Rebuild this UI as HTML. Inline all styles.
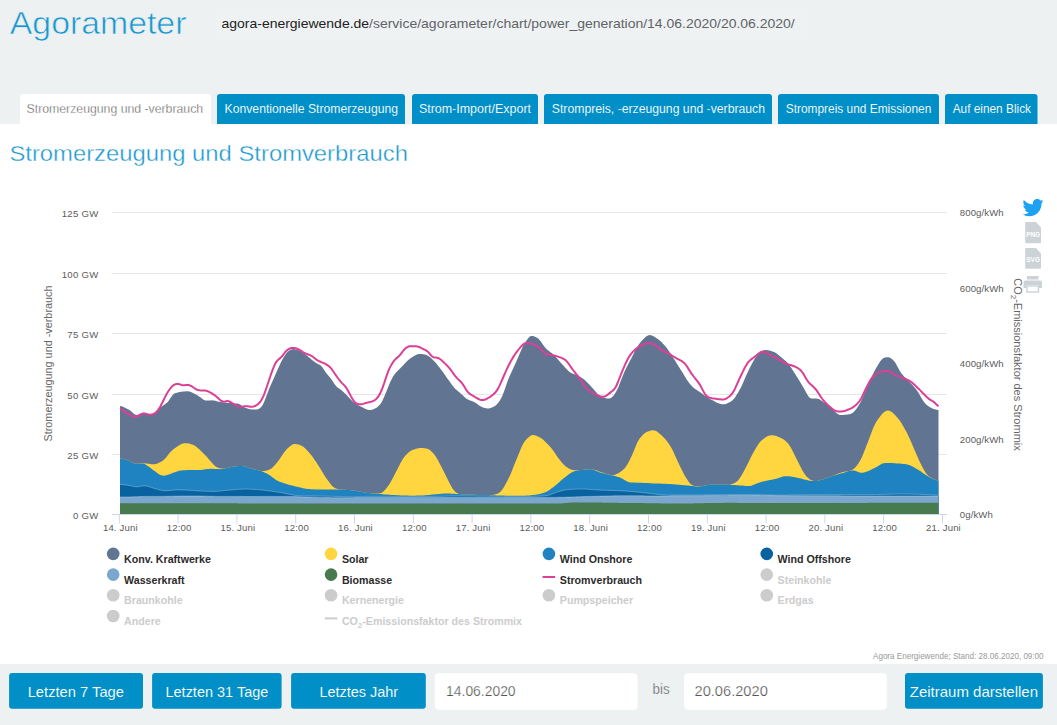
<!DOCTYPE html>
<html><head><meta charset="utf-8"><title>Agorameter</title>
<style>
html,body{margin:0;padding:0;background:#fff;}
body{width:1057px;height:725px;overflow:hidden;position:relative;font-family:"Liberation Sans",sans-serif;}
svg{position:absolute;left:0;top:0;display:block;}
svg text{font-family:"Liberation Sans",sans-serif;}
</style></head><body>
<svg width="1057" height="725" viewBox="0 0 1057 725">
<rect x="0" y="0" width="1057" height="124" fill="#edf1f2"/>
<rect x="216" y="8" width="593" height="31" fill="#eff2f3"/>
<text x="9.8" y="34" textLength="176.6" lengthAdjust="spacingAndGlyphs" font-size="31" fill="#1b97cf" stroke="#edf1f2" stroke-width="0.6">Agorameter</text>
<text x="221.5" y="27.8" textLength="573.2" lengthAdjust="spacingAndGlyphs" font-size="13.2" fill="#606368"><tspan fill="#222222">agora-energiewende.de</tspan>/service/agorameter/chart/power_generation/14.06.2020/20.06.2020/</text>
<path d="M20,124 V97 Q20,94 23,94 H208 Q211,94 211,97 V124 Z" fill="#ffffff"/><text x="26.6" y="112.9" textLength="176.5" lengthAdjust="spacingAndGlyphs" fill="#5a5a5a" stroke="#ffffff" stroke-width="0.3" font-size="12">Stromerzeugung und -verbrauch</text><path d="M217,124 V97 Q217,94 220,94 H402 Q405,94 405,97 V124 Z" fill="#008fc6"/><text x="224.6" y="112.9" textLength="173.4" lengthAdjust="spacingAndGlyphs" fill="#ffffff" stroke="#008fc6" stroke-width="0.1" font-size="12">Konventionelle Stromerzeugung</text><path d="M412,124 V97 Q412,94 415,94 H535 Q538,94 538,97 V124 Z" fill="#008fc6"/><text x="418.9" y="112.9" textLength="112.1" lengthAdjust="spacingAndGlyphs" fill="#ffffff" stroke="#008fc6" stroke-width="0.1" font-size="12">Strom-Import/Export</text><path d="M544,124 V97 Q544,94 547,94 H769 Q772,94 772,97 V124 Z" fill="#008fc6"/><text x="551.8" y="112.9" textLength="213.2" lengthAdjust="spacingAndGlyphs" fill="#ffffff" stroke="#008fc6" stroke-width="0.1" font-size="12">Strompreis, -erzeugung und -verbrauch</text><path d="M778,124 V97 Q778,94 781,94 H936 Q939,94 939,97 V124 Z" fill="#008fc6"/><text x="785.7" y="112.9" textLength="145.6" lengthAdjust="spacingAndGlyphs" fill="#ffffff" stroke="#008fc6" stroke-width="0.1" font-size="12">Strompreis und Emissionen</text><path d="M945,124 V97 Q945,94 948,94 H1034.5 Q1037.5,94 1037.5,97 V124 Z" fill="#008fc6"/><text x="952.7" y="112.9" textLength="78.3" lengthAdjust="spacingAndGlyphs" fill="#ffffff" stroke="#008fc6" stroke-width="0.1" font-size="12">Auf einen Blick</text>
<text x="9.4" y="160.5" textLength="398.5" lengthAdjust="spacingAndGlyphs" font-size="22" fill="#1b97cf" stroke="#ffffff" stroke-width="0.35">Stromerzeugung und Stromverbrauch</text>
<g stroke="#e6e6e6" stroke-width="1"><line x1="112" y1="454.5" x2="947" y2="454.5"/><line x1="112" y1="394.5" x2="947" y2="394.5"/><line x1="112" y1="333.5" x2="947" y2="333.5"/><line x1="112" y1="273.5" x2="947" y2="273.5"/><line x1="112" y1="212.5" x2="947" y2="212.5"/></g>
<path d="M120.0,514.5L120.0,405.9L121.5,406.3L123.0,406.8L124.5,407.4L126.0,408.2L127.5,408.9L129.0,409.8L130.5,410.8L132.0,412.0L133.5,413.4L135.0,414.5L136.5,415.0L138.0,414.9L139.5,414.6L141.0,414.2L142.5,413.8L144.0,413.6L145.5,413.6L147.0,413.7L148.5,413.8L150.0,413.9L151.5,414.0L153.0,413.8L154.5,413.2L156.0,411.9L157.5,410.2L159.0,408.6L160.5,407.2L162.0,406.2L163.5,405.2L165.0,404.2L166.5,403.1L168.0,401.7L169.5,399.6L171.0,397.3L172.5,395.2L174.0,393.8L175.5,393.1L177.0,392.7L178.5,392.3L180.0,392.0L181.5,391.7L183.0,391.5L184.5,391.4L186.0,391.3L187.5,391.2L189.0,391.4L190.5,391.8L192.0,392.5L193.5,393.2L195.0,394.0L196.5,394.8L198.0,395.8L199.5,396.7L201.0,397.8L202.5,399.0L204.0,399.9L205.5,400.5L207.0,400.6L208.5,400.5L210.0,400.4L211.5,400.3L213.0,400.4L214.5,400.6L216.0,401.0L217.5,401.5L219.0,401.8L220.5,402.1L222.0,402.3L223.5,402.5L225.0,402.6L226.5,402.8L228.0,402.9L229.5,403.0L231.0,403.1L232.5,403.2L234.0,403.3L235.5,403.4L237.0,403.5L238.5,403.8L240.0,404.4L241.5,405.4L243.0,406.5L244.5,407.4L246.0,408.1L247.5,408.6L249.0,409.0L250.5,409.3L252.0,409.4L253.5,409.4L255.0,409.4L256.5,409.4L258.0,409.2L259.5,408.6L261.0,407.2L262.5,405.2L264.0,402.3L265.5,398.6L267.0,394.4L268.5,390.4L270.0,386.8L271.5,383.4L273.0,380.1L274.5,376.8L276.0,373.3L277.5,369.8L279.0,366.4L280.5,363.2L282.0,360.3L283.5,357.6L285.0,355.2L286.5,353.1L288.0,351.6L289.5,350.4L291.0,349.6L292.5,349.2L294.0,349.1L295.5,349.4L297.0,349.8L298.5,350.3L300.0,350.9L301.5,351.7L303.0,352.6L304.5,353.7L306.0,354.9L307.5,356.1L309.0,357.4L310.5,358.6L312.0,359.9L313.5,361.1L315.0,362.2L316.5,363.2L318.0,363.9L319.5,364.7L321.0,365.7L322.5,367.4L324.0,369.7L325.5,372.0L327.0,374.1L328.5,375.8L330.0,377.6L331.5,379.6L333.0,381.8L334.5,384.1L336.0,386.0L337.5,387.5L339.0,388.6L340.5,389.6L342.0,390.8L343.5,392.1L345.0,393.5L346.5,395.0L348.0,396.6L349.5,398.2L351.0,399.8L352.5,401.3L354.0,402.5L355.5,403.6L357.0,404.5L358.5,405.4L360.0,406.1L361.5,406.9L363.0,407.6L364.5,408.4L366.0,409.1L367.5,409.7L369.0,410.1L370.5,410.1L372.0,409.8L373.5,409.3L375.0,408.6L376.5,407.7L378.0,406.6L379.5,405.1L381.0,403.2L382.5,400.6L384.0,397.3L385.5,393.6L387.0,389.9L388.5,386.2L390.0,382.6L391.5,379.4L393.0,376.6L394.5,374.4L396.0,372.6L397.5,371.0L399.0,369.5L400.5,368.0L402.0,366.5L403.5,364.9L405.0,363.2L406.5,361.7L408.0,360.3L409.5,359.1L411.0,358.0L412.5,356.9L414.0,356.0L415.5,355.2L417.0,354.5L418.5,354.1L420.0,354.0L421.5,354.1L423.0,354.2L424.5,354.5L426.0,354.8L427.5,355.4L429.0,356.4L430.5,357.6L432.0,359.0L433.5,360.4L435.0,362.0L436.5,363.8L438.0,365.7L439.5,367.6L441.0,369.6L442.5,371.6L444.0,373.6L445.5,375.8L447.0,377.9L448.5,380.0L450.0,382.1L451.5,384.2L453.0,386.2L454.5,388.0L456.0,389.5L457.5,390.8L459.0,392.0L460.5,393.3L462.0,394.7L463.5,396.1L465.0,397.5L466.5,398.7L468.0,399.6L469.5,400.3L471.0,400.8L472.5,401.3L474.0,401.9L475.5,402.8L477.0,403.8L478.5,405.0L480.0,406.0L481.5,406.8L483.0,407.4L484.5,407.9L486.0,408.3L487.5,408.5L489.0,408.4L490.5,408.1L492.0,407.6L493.5,406.8L495.0,405.9L496.5,404.7L498.0,403.0L499.5,400.9L501.0,398.5L502.5,395.4L504.0,391.5L505.5,387.2L507.0,382.8L508.5,378.8L510.0,375.2L511.5,371.9L513.0,368.7L514.5,365.5L516.0,362.2L517.5,358.8L519.0,355.2L520.5,351.7L522.0,348.3L523.5,345.3L525.0,342.7L526.5,340.4L528.0,338.4L529.5,336.8L531.0,336.0L532.5,336.0L534.0,336.3L535.5,337.0L537.0,337.7L538.5,338.8L540.0,340.4L541.5,342.4L543.0,344.7L544.5,346.8L546.0,348.6L547.5,350.0L549.0,351.1L550.5,352.2L552.0,353.3L553.5,354.6L555.0,356.2L556.5,357.8L558.0,359.5L559.5,361.3L561.0,362.9L562.5,364.6L564.0,366.3L565.5,368.0L567.0,369.6L568.5,371.1L570.0,372.2L571.5,373.1L573.0,373.8L574.5,374.3L576.0,374.8L577.5,375.4L579.0,376.2L580.5,377.0L582.0,378.0L583.5,379.1L585.0,380.3L586.5,381.7L588.0,383.2L589.5,384.8L591.0,386.4L592.5,388.0L594.0,389.8L595.5,391.6L597.0,393.3L598.5,394.8L600.0,396.0L601.5,396.8L603.0,397.4L604.5,397.8L606.0,398.2L607.5,398.4L609.0,398.5L610.5,398.2L612.0,397.3L613.5,395.7L615.0,393.5L616.5,391.0L618.0,388.0L619.5,384.3L621.0,380.3L622.5,376.4L624.0,372.8L625.5,369.6L627.0,366.6L628.5,363.7L630.0,360.8L631.5,357.9L633.0,355.0L634.5,352.0L636.0,349.1L637.5,346.5L639.0,344.2L640.5,342.3L642.0,340.5L643.5,338.9L645.0,337.4L646.5,336.2L648.0,335.4L649.5,335.1L651.0,335.2L652.5,335.7L654.0,336.5L655.5,337.4L657.0,338.4L658.5,339.5L660.0,340.7L661.5,342.1L663.0,343.7L664.5,345.3L666.0,347.1L667.5,349.1L669.0,351.2L670.5,353.5L672.0,355.8L673.5,358.2L675.0,360.6L676.5,363.0L678.0,365.4L679.5,367.8L681.0,370.2L682.5,372.6L684.0,375.0L685.5,377.5L687.0,379.9L688.5,382.1L690.0,384.1L691.5,385.8L693.0,387.2L694.5,388.4L696.0,389.5L697.5,390.5L699.0,391.5L700.5,392.5L702.0,393.6L703.5,394.7L705.0,395.7L706.5,396.8L708.0,397.8L709.5,398.7L711.0,399.5L712.5,400.3L714.0,401.1L715.5,401.9L717.0,402.7L718.5,403.3L720.0,403.8L721.5,404.2L723.0,404.3L724.5,404.2L726.0,403.9L727.5,403.3L729.0,402.6L730.5,401.7L732.0,400.7L733.5,399.2L735.0,397.4L736.5,395.1L738.0,392.7L739.5,390.1L741.0,387.2L742.5,384.1L744.0,380.6L745.5,377.1L747.0,373.8L748.5,370.6L750.0,367.5L751.5,364.5L753.0,361.7L754.5,359.1L756.0,357.0L757.5,355.2L759.0,353.6L760.5,352.1L762.0,350.9L763.5,350.2L765.0,349.9L766.5,350.0L768.0,350.2L769.5,350.5L771.0,350.9L772.5,351.4L774.0,352.0L775.5,352.8L777.0,353.8L778.5,355.0L780.0,356.2L781.5,357.5L783.0,358.7L784.5,359.9L786.0,361.2L787.5,362.8L789.0,364.6L790.5,366.7L792.0,369.0L793.5,371.4L795.0,373.8L796.5,376.2L798.0,378.6L799.5,381.0L801.0,383.5L802.5,385.9L804.0,388.5L805.5,391.3L807.0,394.1L808.5,396.4L810.0,397.9L811.5,398.5L813.0,398.6L814.5,398.6L816.0,398.6L817.5,398.7L819.0,399.1L820.5,399.9L822.0,401.0L823.5,402.2L825.0,403.3L826.5,404.4L828.0,405.5L829.5,406.7L831.0,407.9L832.5,409.3L834.0,410.7L835.5,412.2L837.0,413.5L838.5,414.4L840.0,414.9L841.5,415.0L843.0,414.9L844.5,414.8L846.0,414.7L847.5,414.5L849.0,414.2L850.5,413.9L852.0,413.3L853.5,412.2L855.0,410.6L856.5,408.7L858.0,406.6L859.5,404.1L861.0,401.2L862.5,398.0L864.0,394.6L865.5,391.1L867.0,387.5L868.5,383.9L870.0,380.4L871.5,377.1L873.0,374.0L874.5,371.0L876.0,368.3L877.5,365.8L879.0,363.3L880.5,361.0L882.0,359.2L883.5,358.1L885.0,357.5L886.5,357.3L888.0,357.2L889.5,357.5L891.0,358.2L892.5,359.4L894.0,360.9L895.5,363.0L897.0,365.7L898.5,368.6L900.0,371.3L901.5,373.4L903.0,375.2L904.5,376.9L906.0,378.5L907.5,379.9L909.0,381.4L910.5,382.9L912.0,384.5L913.5,386.2L915.0,387.9L916.5,389.8L918.0,392.1L919.5,394.6L921.0,397.2L922.5,399.8L924.0,401.9L925.5,403.7L927.0,405.2L928.5,406.3L930.0,407.2L931.5,408.0L933.0,408.7L934.5,409.2L936.0,409.6L937.5,409.9L938.5,410.0L938.5,514.5Z" fill="#617593"/>
<path d="M120.0,514.5L120.0,458.4L121.5,458.5L123.0,458.9L124.5,459.3L126.0,459.7L127.5,460.2L129.0,460.9L130.5,461.7L132.0,462.6L133.5,463.3L135.0,463.6L136.5,463.7L138.0,463.5L139.5,463.4L141.0,463.3L142.5,463.2L144.0,463.3L145.5,463.4L147.0,463.6L148.5,463.8L150.0,464.0L151.5,464.2L153.0,464.2L154.5,464.2L156.0,463.9L157.5,463.4L159.0,462.8L160.5,462.1L162.0,461.2L163.5,460.1L165.0,458.7L166.5,456.9L168.0,455.0L169.5,453.1L171.0,451.4L172.5,450.0L174.0,448.8L175.5,447.7L177.0,446.7L178.5,445.7L180.0,444.8L181.5,444.1L183.0,443.6L184.5,443.3L186.0,443.2L187.5,443.3L189.0,443.5L190.5,443.9L192.0,444.4L193.5,445.0L195.0,445.8L196.5,446.9L198.0,448.2L199.5,449.6L201.0,451.0L202.5,452.4L204.0,453.9L205.5,455.5L207.0,457.1L208.5,458.9L210.0,460.6L211.5,462.3L213.0,463.9L214.5,465.4L216.0,466.7L217.5,467.6L219.0,468.1L220.5,468.4L222.0,468.6L223.5,468.7L225.0,468.5L226.5,468.1L228.0,467.7L229.5,467.4L231.0,467.1L232.5,466.8L234.0,466.6L235.5,466.4L237.0,466.2L238.5,466.0L240.0,466.0L241.5,465.9L243.0,466.1L244.5,466.4L246.0,466.8L247.5,467.3L249.0,467.9L250.5,468.4L252.0,468.8L253.5,469.2L255.0,469.5L256.5,469.9L258.0,470.2L259.5,470.6L261.0,471.1L262.5,471.1L264.0,471.0L265.5,470.7L267.0,470.4L268.5,469.9L270.0,469.3L271.5,468.4L273.0,467.1L274.5,465.5L276.0,463.7L277.5,461.9L279.0,459.9L280.5,457.8L282.0,455.5L283.5,453.3L285.0,451.3L286.5,449.6L288.0,448.1L289.5,446.7L291.0,445.5L292.5,444.6L294.0,444.1L295.5,444.0L297.0,444.2L298.5,444.6L300.0,445.1L301.5,445.7L303.0,446.6L304.5,447.8L306.0,449.2L307.5,450.8L309.0,452.4L310.5,454.2L312.0,456.1L313.5,458.2L315.0,460.4L316.5,462.6L318.0,464.9L319.5,467.3L321.0,469.8L322.5,472.3L324.0,474.7L325.5,477.0L327.0,479.2L328.5,481.3L330.0,483.3L331.5,485.2L333.0,486.7L334.5,487.7L336.0,488.4L337.5,489.0L339.0,489.3L340.5,489.5L342.0,489.6L343.5,489.7L345.0,489.8L346.5,489.9L348.0,490.0L349.5,490.1L351.0,490.3L352.5,490.4L354.0,490.6L355.5,490.8L357.0,491.1L358.5,491.4L360.0,491.7L361.5,491.9L363.0,492.2L364.5,492.5L366.0,492.7L367.5,492.9L369.0,493.1L370.5,493.2L372.0,493.3L373.5,493.4L375.0,493.4L376.5,493.5L378.0,493.5L379.5,493.5L381.0,493.1L382.5,492.3L384.0,490.9L385.5,489.3L387.0,487.5L388.5,485.5L390.0,483.2L391.5,480.6L393.0,477.8L394.5,474.8L396.0,471.9L397.5,469.0L399.0,466.1L400.5,463.1L402.0,460.4L403.5,458.0L405.0,456.0L406.5,454.4L408.0,452.9L409.5,451.7L411.0,450.7L412.5,449.9L414.0,449.4L415.5,448.9L417.0,448.6L418.5,448.3L420.0,448.1L421.5,448.1L423.0,448.1L424.5,448.3L426.0,448.5L427.5,448.8L429.0,449.5L430.5,450.5L432.0,451.9L433.5,453.5L435.0,455.5L436.5,457.7L438.0,460.3L439.5,463.2L441.0,466.1L442.5,469.0L444.0,472.0L445.5,475.1L447.0,478.1L448.5,481.0L450.0,484.0L451.5,486.8L453.0,489.2L454.5,491.0L456.0,492.4L457.5,493.3L459.0,493.9L460.5,494.2L462.0,494.3L463.5,494.4L465.0,494.4L466.5,494.5L468.0,494.6L469.5,494.6L471.0,494.7L472.5,494.8L474.0,494.8L475.5,494.8L477.0,494.9L478.5,494.9L480.0,494.9L481.5,495.0L483.0,495.0L484.5,495.0L486.0,495.1L487.5,495.1L489.0,495.1L490.5,495.1L492.0,494.9L493.5,494.7L495.0,494.4L496.5,494.0L498.0,493.5L499.5,492.6L501.0,491.2L502.5,489.2L504.0,486.9L505.5,484.2L507.0,481.5L508.5,478.6L510.0,475.4L511.5,471.9L513.0,468.1L514.5,464.3L516.0,460.6L517.5,456.9L519.0,453.2L520.5,449.5L522.0,446.1L523.5,443.3L525.0,441.1L526.5,439.3L528.0,437.7L529.5,436.4L531.0,435.5L532.5,435.0L534.0,435.0L535.5,435.4L537.0,436.0L538.5,436.7L540.0,437.5L541.5,438.5L543.0,439.6L544.5,441.0L546.0,442.4L547.5,444.0L549.0,445.6L550.5,447.3L552.0,449.1L553.5,451.1L555.0,453.3L556.5,455.6L558.0,457.7L559.5,459.6L561.0,461.4L562.5,463.2L564.0,464.8L565.5,466.2L567.0,467.3L568.5,468.3L570.0,469.1L571.5,469.7L573.0,470.1L574.5,470.3L576.0,470.3L577.5,470.2L579.0,470.1L580.5,470.0L582.0,469.9L583.5,469.8L585.0,469.6L586.5,469.5L588.0,469.3L589.5,469.3L591.0,469.3L592.5,469.4L594.0,469.7L595.5,470.1L597.0,470.6L598.5,471.2L600.0,471.7L601.5,472.3L603.0,472.8L604.5,473.2L606.0,473.7L607.5,474.2L609.0,474.6L610.5,475.0L612.0,475.2L613.5,475.2L615.0,474.8L616.5,474.1L618.0,473.4L619.5,472.5L621.0,471.4L622.5,470.2L624.0,468.9L625.5,467.2L627.0,465.1L628.5,462.5L630.0,459.5L631.5,456.3L633.0,452.9L634.5,449.2L636.0,445.4L637.5,442.1L639.0,439.5L640.5,437.4L642.0,435.7L643.5,434.2L645.0,433.0L646.5,432.1L648.0,431.5L649.5,431.0L651.0,430.6L652.5,430.3L654.0,430.4L655.5,430.8L657.0,431.6L658.5,432.7L660.0,433.9L661.5,435.3L663.0,436.7L664.5,438.2L666.0,440.0L667.5,442.0L669.0,444.1L670.5,446.4L672.0,449.1L673.5,452.1L675.0,455.4L676.5,458.8L678.0,462.1L679.5,465.3L681.0,468.3L682.5,471.3L684.0,474.2L685.5,476.9L687.0,479.3L688.5,481.4L690.0,483.4L691.5,484.8L693.0,485.6L694.5,486.0L696.0,486.1L697.5,486.3L699.0,486.4L700.5,486.4L702.0,486.2L703.5,485.8L705.0,485.5L706.5,485.2L708.0,485.0L709.5,484.8L711.0,484.8L712.5,484.8L714.0,484.8L715.5,484.8L717.0,484.8L718.5,484.8L720.0,484.8L721.5,484.8L723.0,484.8L724.5,484.8L726.0,484.8L727.5,484.8L729.0,484.7L730.5,484.4L732.0,484.0L733.5,483.4L735.0,482.7L736.5,481.8L738.0,480.5L739.5,478.6L741.0,476.3L742.5,473.7L744.0,471.0L745.5,468.2L747.0,465.3L748.5,462.2L750.0,459.0L751.5,456.0L753.0,453.2L754.5,450.5L756.0,447.9L757.5,445.5L759.0,443.3L760.5,441.5L762.0,440.1L763.5,438.9L765.0,437.7L766.5,436.8L768.0,436.0L769.5,435.5L771.0,435.2L772.5,435.2L774.0,435.5L775.5,435.8L777.0,436.3L778.5,436.9L780.0,437.5L781.5,438.2L783.0,439.1L784.5,440.1L786.0,441.4L787.5,442.8L789.0,444.7L790.5,447.1L792.0,449.8L793.5,452.7L795.0,455.7L796.5,458.7L798.0,461.8L799.5,464.8L801.0,467.7L802.5,470.4L804.0,472.9L805.5,475.2L807.0,477.0L808.5,478.3L810.0,479.4L811.5,480.2L813.0,480.8L814.5,481.0L816.0,481.0L817.5,480.7L819.0,480.4L820.5,480.0L822.0,479.6L823.5,479.2L825.0,478.7L826.5,478.1L828.0,477.6L829.5,477.0L831.0,476.5L832.5,475.9L834.0,475.3L835.5,474.7L837.0,474.1L838.5,473.6L840.0,473.0L841.5,472.5L843.0,472.1L844.5,471.8L846.0,471.5L847.5,471.3L849.0,471.0L850.5,470.6L852.0,470.0L853.5,469.1L855.0,467.7L856.5,465.9L858.0,463.9L859.5,461.7L861.0,459.0L862.5,455.8L864.0,452.1L865.5,448.2L867.0,444.3L868.5,440.4L870.0,436.5L871.5,432.5L873.0,428.6L874.5,425.2L876.0,422.3L877.5,420.0L879.0,417.9L880.5,415.9L882.0,414.1L883.5,412.6L885.0,411.5L886.5,410.7L888.0,410.5L889.5,410.7L891.0,411.5L892.5,412.6L894.0,414.0L895.5,415.6L897.0,417.2L898.5,419.0L900.0,420.9L901.5,423.2L903.0,425.7L904.5,428.4L906.0,431.1L907.5,434.1L909.0,437.3L910.5,440.6L912.0,444.0L913.5,447.5L915.0,450.9L916.5,454.4L918.0,457.9L919.5,461.2L921.0,464.3L922.5,467.2L924.0,470.0L925.5,472.4L927.0,474.4L928.5,475.9L930.0,477.1L931.5,478.0L933.0,478.8L934.5,479.5L936.0,480.0L937.5,480.5L938.5,480.7L938.5,514.5Z" fill="#ffd540"/>
<path d="M120.0,514.5L120.0,458.4L121.5,458.5L123.0,458.9L124.5,459.3L126.0,459.7L127.5,460.2L129.0,460.9L130.5,461.7L132.0,462.6L133.5,463.3L135.0,463.6L136.5,463.7L138.0,463.6L139.5,463.5L141.0,463.5L142.5,463.5L144.0,463.8L145.5,464.4L147.0,465.4L148.5,466.5L150.0,467.6L151.5,468.8L153.0,469.9L154.5,471.0L156.0,472.1L157.5,473.2L159.0,474.2L160.5,475.0L162.0,475.6L163.5,475.7L165.0,475.5L166.5,475.2L168.0,474.7L169.5,474.2L171.0,473.7L172.5,473.1L174.0,472.5L175.5,471.9L177.0,471.4L178.5,470.9L180.0,470.6L181.5,470.4L183.0,470.3L184.5,470.2L186.0,470.2L187.5,470.1L189.0,470.1L190.5,470.0L192.0,470.0L193.5,470.0L195.0,470.0L196.5,470.0L198.0,469.9L199.5,469.9L201.0,469.9L202.5,469.7L204.0,469.6L205.5,469.3L207.0,469.1L208.5,468.9L210.0,468.8L211.5,468.7L213.0,468.8L214.5,468.9L216.0,469.0L217.5,469.1L219.0,469.1L220.5,469.2L222.0,469.1L223.5,468.9L225.0,468.5L226.5,468.1L228.0,467.7L229.5,467.4L231.0,467.1L232.5,466.8L234.0,466.6L235.5,466.4L237.0,466.2L238.5,466.1L240.0,466.0L241.5,465.9L243.0,466.1L244.5,466.4L246.0,466.8L247.5,467.3L249.0,467.9L250.5,468.4L252.0,468.8L253.5,469.2L255.0,469.5L256.5,469.9L258.0,470.2L259.5,470.6L261.0,471.1L262.5,471.6L264.0,472.2L265.5,472.9L267.0,473.6L268.5,474.4L270.0,475.4L271.5,476.5L273.0,477.7L274.5,478.8L276.0,479.9L277.5,480.8L279.0,481.5L280.5,482.1L282.0,482.6L283.5,483.1L285.0,483.6L286.5,484.0L288.0,484.4L289.5,484.9L291.0,485.3L292.5,485.6L294.0,486.0L295.5,486.4L297.0,486.7L298.5,487.1L300.0,487.5L301.5,487.8L303.0,488.2L304.5,488.6L306.0,488.8L307.5,489.0L309.0,489.1L310.5,489.2L312.0,489.3L313.5,489.3L315.0,489.4L316.5,489.4L318.0,489.4L319.5,489.4L321.0,489.4L322.5,489.4L324.0,489.4L325.5,489.4L327.0,489.4L328.5,489.4L330.0,489.4L331.5,489.4L333.0,489.4L334.5,489.4L336.0,489.4L337.5,489.5L339.0,489.5L340.5,489.6L342.0,489.6L343.5,489.7L345.0,489.8L346.5,489.9L348.0,490.0L349.5,490.1L351.0,490.3L352.5,490.4L354.0,490.6L355.5,490.8L357.0,491.1L358.5,491.4L360.0,491.7L361.5,491.9L363.0,492.2L364.5,492.5L366.0,492.7L367.5,492.9L369.0,493.1L370.5,493.3L372.0,493.4L373.5,493.5L375.0,493.7L376.5,493.8L378.0,493.9L379.5,494.0L381.0,494.1L382.5,494.3L384.0,494.4L385.5,494.5L387.0,494.6L388.5,494.7L390.0,494.8L391.5,494.9L393.0,495.0L394.5,495.1L396.0,495.2L397.5,495.2L399.0,495.3L400.5,495.4L402.0,495.4L403.5,495.5L405.0,495.5L406.5,495.6L408.0,495.6L409.5,495.7L411.0,495.7L412.5,495.7L414.0,495.7L415.5,495.7L417.0,495.6L418.5,495.6L420.0,495.5L421.5,495.4L423.0,495.4L424.5,495.3L426.0,495.2L427.5,495.1L429.0,495.0L430.5,494.8L432.0,494.6L433.5,494.5L435.0,494.3L436.5,494.2L438.0,494.0L439.5,493.9L441.0,493.8L442.5,493.7L444.0,493.6L445.5,493.6L447.0,493.6L448.5,493.6L450.0,493.6L451.5,493.7L453.0,493.8L454.5,493.8L456.0,493.9L457.5,494.0L459.0,494.1L460.5,494.2L462.0,494.3L463.5,494.4L465.0,494.4L466.5,494.5L468.0,494.6L469.5,494.6L471.0,494.7L472.5,494.8L474.0,494.8L475.5,494.8L477.0,494.9L478.5,494.9L480.0,494.9L481.5,495.0L483.0,495.0L484.5,495.0L486.0,495.1L487.5,495.1L489.0,495.1L490.5,495.2L492.0,495.2L493.5,495.3L495.0,495.3L496.5,495.4L498.0,495.4L499.5,495.5L501.0,495.5L502.5,495.6L504.0,495.6L505.5,495.7L507.0,495.7L508.5,495.7L510.0,495.7L511.5,495.7L513.0,495.7L514.5,495.7L516.0,495.7L517.5,495.7L519.0,495.7L520.5,495.7L522.0,495.7L523.5,495.7L525.0,495.7L526.5,495.6L528.0,495.6L529.5,495.5L531.0,495.3L532.5,495.1L534.0,494.9L535.5,494.7L537.0,494.5L538.5,494.2L540.0,493.9L541.5,493.5L543.0,493.1L544.5,492.5L546.0,491.9L547.5,491.2L549.0,490.3L550.5,489.2L552.0,488.0L553.5,486.9L555.0,485.7L556.5,484.4L558.0,483.2L559.5,481.9L561.0,480.6L562.5,479.3L564.0,478.1L565.5,477.0L567.0,475.8L568.5,474.6L570.0,473.5L571.5,472.5L573.0,471.8L574.5,471.2L576.0,470.8L577.5,470.5L579.0,470.3L580.5,470.1L582.0,469.9L583.5,469.8L585.0,469.6L586.5,469.5L588.0,469.3L589.5,469.3L591.0,469.3L592.5,469.5L594.0,469.9L595.5,470.5L597.0,471.2L598.5,471.8L600.0,472.4L601.5,472.8L603.0,473.2L604.5,473.6L606.0,474.0L607.5,474.3L609.0,474.7L610.5,475.1L612.0,475.4L613.5,475.8L615.0,476.1L616.5,476.5L618.0,476.9L619.5,477.3L621.0,477.9L622.5,478.7L624.0,479.7L625.5,480.6L627.0,481.4L628.5,482.0L630.0,482.4L631.5,482.5L633.0,482.6L634.5,482.6L636.0,482.7L637.5,482.7L639.0,482.7L640.5,482.8L642.0,482.8L643.5,482.9L645.0,482.9L646.5,483.0L648.0,483.1L649.5,483.2L651.0,483.3L652.5,483.4L654.0,483.4L655.5,483.5L657.0,483.6L658.5,483.6L660.0,483.6L661.5,483.7L663.0,483.7L664.5,483.7L666.0,483.8L667.5,483.9L669.0,484.0L670.5,484.1L672.0,484.2L673.5,484.3L675.0,484.4L676.5,484.5L678.0,484.7L679.5,484.8L681.0,484.9L682.5,485.0L684.0,485.2L685.5,485.3L687.0,485.4L688.5,485.6L690.0,485.7L691.5,485.9L693.0,486.0L694.5,486.2L696.0,486.4L697.5,486.6L699.0,486.7L700.5,486.5L702.0,486.2L703.5,485.8L705.0,485.5L706.5,485.2L708.0,485.0L709.5,484.8L711.0,484.8L712.5,484.8L714.0,484.8L715.5,484.8L717.0,484.8L718.5,484.8L720.0,484.8L721.5,484.8L723.0,484.8L724.5,484.8L726.0,484.8L727.5,484.8L729.0,484.8L730.5,484.8L732.0,484.9L733.5,485.0L735.0,485.1L736.5,485.2L738.0,485.3L739.5,485.4L741.0,485.5L742.5,485.6L744.0,485.8L745.5,485.9L747.0,486.0L748.5,486.1L750.0,486.0L751.5,485.7L753.0,485.1L754.5,484.4L756.0,483.8L757.5,483.2L759.0,482.8L760.5,482.3L762.0,481.8L763.5,481.4L765.0,481.1L766.5,480.7L768.0,480.4L769.5,480.1L771.0,479.9L772.5,479.6L774.0,479.3L775.5,478.9L777.0,478.5L778.5,478.0L780.0,477.5L781.5,477.0L783.0,476.6L784.5,476.3L786.0,476.2L787.5,476.2L789.0,476.3L790.5,476.5L792.0,476.7L793.5,477.0L795.0,477.3L796.5,477.6L798.0,477.9L799.5,478.2L801.0,478.6L802.5,479.0L804.0,479.4L805.5,479.8L807.0,480.1L808.5,480.4L810.0,480.7L811.5,480.9L813.0,481.0L814.5,481.1L816.0,481.0L817.5,480.7L819.0,480.4L820.5,480.0L822.0,479.6L823.5,479.2L825.0,478.7L826.5,478.1L828.0,477.6L829.5,477.0L831.0,476.5L832.5,476.0L834.0,475.5L835.5,475.1L837.0,474.6L838.5,474.2L840.0,473.8L841.5,473.3L843.0,472.9L844.5,472.5L846.0,472.0L847.5,471.5L849.0,471.1L850.5,470.7L852.0,470.5L853.5,470.5L855.0,470.8L856.5,471.3L858.0,471.9L859.5,472.4L861.0,472.7L862.5,472.7L864.0,472.4L865.5,472.0L867.0,471.5L868.5,470.9L870.0,470.3L871.5,469.6L873.0,468.8L874.5,468.0L876.0,467.2L877.5,466.4L879.0,465.5L880.5,464.5L882.0,463.7L883.5,463.2L885.0,463.0L886.5,462.9L888.0,463.0L889.5,463.0L891.0,463.1L892.5,463.1L894.0,463.2L895.5,463.3L897.0,463.4L898.5,463.5L900.0,463.6L901.5,463.7L903.0,463.9L904.5,464.1L906.0,464.3L907.5,464.5L909.0,464.9L910.5,465.4L912.0,466.2L913.5,467.0L915.0,467.9L916.5,468.8L918.0,469.7L919.5,470.6L921.0,471.6L922.5,472.7L924.0,473.7L925.5,474.8L927.0,475.7L928.5,476.6L930.0,477.4L931.5,478.2L933.0,478.9L934.5,479.5L936.0,480.0L937.5,480.5L938.5,480.7L938.5,514.5Z" fill="#2083c1"/>
<path d="M120.0,514.5L120.0,484.5L121.5,484.5L123.0,484.7L124.5,484.8L126.0,485.0L127.5,485.2L129.0,485.4L130.5,485.7L132.0,486.1L133.5,486.5L135.0,486.7L136.5,486.8L138.0,486.8L139.5,486.6L141.0,486.3L142.5,486.0L144.0,485.9L145.5,485.9L147.0,486.1L148.5,486.5L150.0,487.0L151.5,487.5L153.0,488.0L154.5,488.5L156.0,488.9L157.5,489.3L159.0,489.8L160.5,490.1L162.0,490.4L163.5,490.6L165.0,490.7L166.5,490.7L168.0,490.6L169.5,490.5L171.0,490.3L172.5,490.2L174.0,490.1L175.5,490.0L177.0,489.9L178.5,489.9L180.0,489.9L181.5,489.9L183.0,490.0L184.5,490.0L186.0,490.1L187.5,490.2L189.0,490.2L190.5,490.3L192.0,490.4L193.5,490.5L195.0,490.6L196.5,490.8L198.0,490.9L199.5,491.0L201.0,491.0L202.5,491.1L204.0,491.2L205.5,491.2L207.0,491.3L208.5,491.3L210.0,491.3L211.5,491.4L213.0,491.4L214.5,491.4L216.0,491.3L217.5,491.3L219.0,491.1L220.5,491.0L222.0,490.8L223.5,490.6L225.0,490.5L226.5,490.3L228.0,490.2L229.5,490.1L231.0,489.9L232.5,489.8L234.0,489.7L235.5,489.6L237.0,489.4L238.5,489.3L240.0,489.2L241.5,489.2L243.0,489.1L244.5,489.1L246.0,489.1L247.5,489.1L249.0,489.2L250.5,489.2L252.0,489.3L253.5,489.3L255.0,489.4L256.5,489.5L258.0,489.6L259.5,489.8L261.0,489.9L262.5,490.1L264.0,490.2L265.5,490.4L267.0,490.6L268.5,490.8L270.0,491.0L271.5,491.2L273.0,491.4L274.5,491.6L276.0,491.8L277.5,492.1L279.0,492.3L280.5,492.6L282.0,492.8L283.5,493.1L285.0,493.4L286.5,493.8L288.0,494.1L289.5,494.4L291.0,494.6L292.5,494.9L294.0,495.2L295.5,495.4L297.0,495.7L298.5,495.8L300.0,496.0L301.5,496.0L303.0,496.0L304.5,496.0L306.0,496.0L307.5,496.0L309.0,496.0L310.5,496.0L312.0,496.0L313.5,496.0L315.0,496.0L316.5,496.1L318.0,496.1L319.5,496.1L321.0,496.1L322.5,496.1L324.0,496.2L325.5,496.2L327.0,496.2L328.5,496.2L330.0,496.3L331.5,496.3L333.0,496.3L334.5,496.4L336.0,496.4L337.5,496.4L339.0,496.5L340.5,496.6L342.0,496.6L343.5,496.7L345.0,496.7L346.5,496.8L348.0,496.8L349.5,496.8L351.0,496.8L352.5,496.8L354.0,496.8L355.5,496.8L357.0,496.7L358.5,496.7L360.0,496.6L361.5,496.6L363.0,496.5L364.5,496.5L366.0,496.4L367.5,496.4L369.0,496.4L370.5,496.4L372.0,496.4L373.5,496.4L375.0,496.4L376.5,496.4L378.0,496.4L379.5,496.4L381.0,496.4L382.5,496.4L384.0,496.4L385.5,496.4L387.0,496.4L388.5,496.4L390.0,496.4L391.5,496.4L393.0,496.5L394.5,496.5L396.0,496.6L397.5,496.7L399.0,496.7L400.5,496.8L402.0,496.8L403.5,496.8L405.0,496.8L406.5,496.8L408.0,496.8L409.5,496.8L411.0,496.8L412.5,496.7L414.0,496.7L415.5,496.6L417.0,496.6L418.5,496.6L420.0,496.5L421.5,496.5L423.0,496.5L424.5,496.5L426.0,496.5L427.5,496.5L429.0,496.4L430.5,496.4L432.0,496.4L433.5,496.4L435.0,496.4L436.5,496.4L438.0,496.4L439.5,496.3L441.0,496.3L442.5,496.3L444.0,496.2L445.5,496.2L447.0,496.1L448.5,496.1L450.0,496.1L451.5,496.0L453.0,496.0L454.5,496.0L456.0,496.0L457.5,496.0L459.0,496.0L460.5,496.0L462.0,496.0L463.5,496.1L465.0,496.1L466.5,496.1L468.0,496.1L469.5,496.1L471.0,496.1L472.5,496.1L474.0,496.1L475.5,496.1L477.0,496.2L478.5,496.2L480.0,496.2L481.5,496.2L483.0,496.2L484.5,496.2L486.0,496.2L487.5,496.2L489.0,496.3L490.5,496.3L492.0,496.3L493.5,496.3L495.0,496.3L496.5,496.3L498.0,496.3L499.5,496.3L501.0,496.3L502.5,496.3L504.0,496.4L505.5,496.4L507.0,496.4L508.5,496.4L510.0,496.4L511.5,496.4L513.0,496.4L514.5,496.4L516.0,496.4L517.5,496.4L519.0,496.4L520.5,496.4L522.0,496.4L523.5,496.4L525.0,496.4L526.5,496.4L528.0,496.4L529.5,496.4L531.0,496.4L532.5,496.4L534.0,496.3L535.5,496.3L537.0,496.3L538.5,496.2L540.0,496.1L541.5,496.1L543.0,496.0L544.5,495.8L546.0,495.7L547.5,495.4L549.0,495.1L550.5,494.6L552.0,494.0L553.5,493.4L555.0,492.8L556.5,492.3L558.0,491.8L559.5,491.4L561.0,491.0L562.5,490.6L564.0,490.2L565.5,489.9L567.0,489.7L568.5,489.5L570.0,489.4L571.5,489.3L573.0,489.3L574.5,489.2L576.0,489.2L577.5,489.1L579.0,489.1L580.5,489.1L582.0,489.1L583.5,489.1L585.0,489.1L586.5,489.2L588.0,489.3L589.5,489.4L591.0,489.5L592.5,489.6L594.0,489.7L595.5,489.8L597.0,489.9L598.5,490.0L600.0,490.1L601.5,490.2L603.0,490.2L604.5,490.2L606.0,490.3L607.5,490.3L609.0,490.4L610.5,490.4L612.0,490.4L613.5,490.5L615.0,490.5L616.5,490.6L618.0,490.7L619.5,490.7L621.0,490.8L622.5,490.9L624.0,491.0L625.5,491.1L627.0,491.2L628.5,491.3L630.0,491.5L631.5,491.6L633.0,491.7L634.5,491.8L636.0,492.0L637.5,492.1L639.0,492.3L640.5,492.4L642.0,492.6L643.5,492.7L645.0,492.9L646.5,493.1L648.0,493.2L649.5,493.4L651.0,493.6L652.5,493.7L654.0,493.9L655.5,494.1L657.0,494.3L658.5,494.5L660.0,494.7L661.5,494.9L663.0,495.0L664.5,495.0L666.0,495.1L667.5,495.1L669.0,495.1L670.5,495.1L672.0,495.1L673.5,495.1L675.0,495.1L676.5,495.1L678.0,495.1L679.5,495.1L681.0,495.1L682.5,495.1L684.0,495.1L685.5,495.1L687.0,495.1L688.5,495.1L690.0,495.1L691.5,495.1L693.0,495.1L694.5,495.1L696.0,495.1L697.5,495.1L699.0,495.1L700.5,495.1L702.0,495.1L703.5,495.0L705.0,494.9L706.5,494.8L708.0,494.8L709.5,494.7L711.0,494.7L712.5,494.7L714.0,494.7L715.5,494.7L717.0,494.7L718.5,494.7L720.0,494.7L721.5,494.7L723.0,494.7L724.5,494.7L726.0,494.7L727.5,494.7L729.0,494.7L730.5,494.7L732.0,494.7L733.5,494.7L735.0,494.7L736.5,494.7L738.0,494.7L739.5,494.7L741.0,494.7L742.5,494.7L744.0,494.7L745.5,494.7L747.0,494.7L748.5,494.7L750.0,494.7L751.5,494.7L753.0,494.7L754.5,494.8L756.0,494.8L757.5,494.8L759.0,494.8L760.5,494.9L762.0,494.9L763.5,494.9L765.0,495.0L766.5,495.0L768.0,495.0L769.5,495.1L771.0,495.1L772.5,495.1L774.0,495.1L775.5,495.2L777.0,495.2L778.5,495.2L780.0,495.2L781.5,495.2L783.0,495.2L784.5,495.2L786.0,495.2L787.5,495.2L789.0,495.1L790.5,495.1L792.0,495.1L793.5,495.0L795.0,495.0L796.5,495.0L798.0,494.9L799.5,494.9L801.0,494.9L802.5,494.8L804.0,494.8L805.5,494.8L807.0,494.8L808.5,494.7L810.0,494.7L811.5,494.7L813.0,494.7L814.5,494.7L816.0,494.7L817.5,494.7L819.0,494.7L820.5,494.7L822.0,494.7L823.5,494.7L825.0,494.7L826.5,494.7L828.0,494.7L829.5,494.7L831.0,494.7L832.5,494.7L834.0,494.7L835.5,494.7L837.0,494.7L838.5,494.7L840.0,494.7L841.5,494.7L843.0,494.7L844.5,494.7L846.0,494.7L847.5,494.7L849.0,494.7L850.5,494.7L852.0,494.7L853.5,494.7L855.0,494.7L856.5,494.7L858.0,494.7L859.5,494.7L861.0,494.7L862.5,494.7L864.0,494.7L865.5,494.7L867.0,494.7L868.5,494.7L870.0,494.7L871.5,494.7L873.0,494.7L874.5,494.6L876.0,494.6L877.5,494.6L879.0,494.5L880.5,494.5L882.0,494.4L883.5,494.4L885.0,494.4L886.5,494.3L888.0,494.3L889.5,494.2L891.0,494.2L892.5,494.2L894.0,494.1L895.5,494.1L897.0,494.1L898.5,494.1L900.0,494.0L901.5,494.0L903.0,494.0L904.5,494.1L906.0,494.1L907.5,494.1L909.0,494.1L910.5,494.1L912.0,494.1L913.5,494.2L915.0,494.2L916.5,494.3L918.0,494.3L919.5,494.3L921.0,494.4L922.5,494.4L924.0,494.5L925.5,494.6L927.0,494.6L928.5,494.7L930.0,494.8L931.5,494.8L933.0,494.9L934.5,495.0L936.0,495.1L937.5,495.1L938.5,495.2L938.5,514.5Z" fill="#0862a0"/>
<path d="M120.0,514.5L120.0,496.9L121.5,496.9L123.0,496.9L124.5,496.9L126.0,496.9L127.5,496.9L129.0,496.9L130.5,496.9L132.0,496.8L133.5,496.8L135.0,496.8L136.5,496.7L138.0,496.7L139.5,496.6L141.0,496.6L142.5,496.5L144.0,496.4L145.5,496.4L147.0,496.4L148.5,496.4L150.0,496.4L151.5,496.4L153.0,496.4L154.5,496.4L156.0,496.4L157.5,496.4L159.0,496.4L160.5,496.4L162.0,496.4L163.5,496.4L165.0,496.4L166.5,496.3L168.0,496.3L169.5,496.3L171.0,496.2L172.5,496.2L174.0,496.2L175.5,496.1L177.0,496.1L178.5,496.1L180.0,496.0L181.5,496.0L183.0,496.0L184.5,496.0L186.0,496.0L187.5,496.0L189.0,496.0L190.5,496.0L192.0,496.0L193.5,496.0L195.0,496.0L196.5,496.0L198.0,496.0L199.5,496.0L201.0,496.1L202.5,496.1L204.0,496.1L205.5,496.2L207.0,496.2L208.5,496.3L210.0,496.3L211.5,496.3L213.0,496.3L214.5,496.4L216.0,496.4L217.5,496.4L219.0,496.4L220.5,496.4L222.0,496.4L223.5,496.4L225.0,496.4L226.5,496.4L228.0,496.4L229.5,496.4L231.0,496.4L232.5,496.4L234.0,496.4L235.5,496.4L237.0,496.4L238.5,496.4L240.0,496.4L241.5,496.4L243.0,496.5L244.5,496.5L246.0,496.5L247.5,496.5L249.0,496.5L250.5,496.5L252.0,496.5L253.5,496.5L255.0,496.5L256.5,496.5L258.0,496.5L259.5,496.4L261.0,496.4L262.5,496.4L264.0,496.4L265.5,496.4L267.0,496.4L268.5,496.4L270.0,496.4L271.5,496.4L273.0,496.4L274.5,496.4L276.0,496.4L277.5,496.4L279.0,496.4L280.5,496.4L282.0,496.4L283.5,496.4L285.0,496.4L286.5,496.4L288.0,496.4L289.5,496.4L291.0,496.5L292.5,496.5L294.0,496.6L295.5,496.6L297.0,496.7L298.5,496.8L300.0,496.8L301.5,496.9L303.0,496.9L304.5,497.0L306.0,497.0L307.5,497.1L309.0,497.1L310.5,497.1L312.0,497.2L313.5,497.2L315.0,497.3L316.5,497.3L318.0,497.4L319.5,497.4L321.0,497.4L322.5,497.5L324.0,497.5L325.5,497.6L327.0,497.6L328.5,497.6L330.0,497.6L331.5,497.7L333.0,497.7L334.5,497.7L336.0,497.7L337.5,497.7L339.0,497.7L340.5,497.7L342.0,497.7L343.5,497.7L345.0,497.7L346.5,497.7L348.0,497.7L349.5,497.7L351.0,497.7L352.5,497.7L354.0,497.7L355.5,497.6L357.0,497.6L358.5,497.6L360.0,497.5L361.5,497.5L363.0,497.5L364.5,497.4L366.0,497.4L367.5,497.4L369.0,497.4L370.5,497.4L372.0,497.4L373.5,497.4L375.0,497.4L376.5,497.4L378.0,497.4L379.5,497.4L381.0,497.4L382.5,497.4L384.0,497.4L385.5,497.4L387.0,497.4L388.5,497.4L390.0,497.4L391.5,497.4L393.0,497.4L394.5,497.4L396.0,497.4L397.5,497.4L399.0,497.4L400.5,497.4L402.0,497.4L403.5,497.4L405.0,497.4L406.5,497.4L408.0,497.4L409.5,497.4L411.0,497.4L412.5,497.4L414.0,497.4L415.5,497.4L417.0,497.4L418.5,497.4L420.0,497.4L421.5,497.4L423.0,497.4L424.5,497.4L426.0,497.4L427.5,497.4L429.0,497.4L430.5,497.4L432.0,497.4L433.5,497.4L435.0,497.4L436.5,497.4L438.0,497.4L439.5,497.4L441.0,497.4L442.5,497.4L444.0,497.4L445.5,497.4L447.0,497.4L448.5,497.4L450.0,497.4L451.5,497.4L453.0,497.4L454.5,497.4L456.0,497.4L457.5,497.4L459.0,497.4L460.5,497.4L462.0,497.4L463.5,497.4L465.0,497.4L466.5,497.4L468.0,497.4L469.5,497.4L471.0,497.4L472.5,497.4L474.0,497.4L475.5,497.4L477.0,497.4L478.5,497.4L480.0,497.4L481.5,497.4L483.0,497.4L484.5,497.4L486.0,497.4L487.5,497.4L489.0,497.4L490.5,497.4L492.0,497.4L493.5,497.4L495.0,497.4L496.5,497.4L498.0,497.4L499.5,497.4L501.0,497.4L502.5,497.4L504.0,497.4L505.5,497.4L507.0,497.4L508.5,497.4L510.0,497.4L511.5,497.4L513.0,497.4L514.5,497.4L516.0,497.4L517.5,497.4L519.0,497.4L520.5,497.4L522.0,497.4L523.5,497.4L525.0,497.4L526.5,497.4L528.0,497.4L529.5,497.4L531.0,497.4L532.5,497.4L534.0,497.4L535.5,497.4L537.0,497.4L538.5,497.4L540.0,497.4L541.5,497.4L543.0,497.4L544.5,497.4L546.0,497.4L547.5,497.4L549.0,497.4L550.5,497.4L552.0,497.4L553.5,497.4L555.0,497.4L556.5,497.4L558.0,497.3L559.5,497.3L561.0,497.3L562.5,497.3L564.0,497.2L565.5,497.2L567.0,497.1L568.5,497.1L570.0,497.0L571.5,496.9L573.0,496.9L574.5,496.9L576.0,496.8L577.5,496.8L579.0,496.7L580.5,496.7L582.0,496.6L583.5,496.6L585.0,496.6L586.5,496.5L588.0,496.5L589.5,496.4L591.0,496.4L592.5,496.3L594.0,496.3L595.5,496.3L597.0,496.2L598.5,496.2L600.0,496.1L601.5,496.1L603.0,496.1L604.5,496.0L606.0,496.0L607.5,496.0L609.0,495.9L610.5,495.9L612.0,495.9L613.5,495.8L615.0,495.8L616.5,495.8L618.0,495.8L619.5,495.7L621.0,495.7L622.5,495.7L624.0,495.7L625.5,495.7L627.0,495.7L628.5,495.7L630.0,495.7L631.5,495.7L633.0,495.7L634.5,495.7L636.0,495.7L637.5,495.8L639.0,495.8L640.5,495.8L642.0,495.8L643.5,495.8L645.0,495.9L646.5,495.9L648.0,495.9L649.5,495.9L651.0,496.0L652.5,496.0L654.0,496.0L655.5,496.0L657.0,496.0L658.5,496.0L660.0,496.0L661.5,496.0L663.0,496.0L664.5,496.0L666.0,496.0L667.5,495.9L669.0,495.9L670.5,495.8L672.0,495.8L673.5,495.8L675.0,495.7L676.5,495.7L678.0,495.7L679.5,495.7L681.0,495.7L682.5,495.7L684.0,495.7L685.5,495.7L687.0,495.7L688.5,495.7L690.0,495.7L691.5,495.7L693.0,495.7L694.5,495.7L696.0,495.7L697.5,495.7L699.0,495.7L700.5,495.7L702.0,495.7L703.5,495.7L705.0,495.6L706.5,495.6L708.0,495.6L709.5,495.6L711.0,495.6L712.5,495.6L714.0,495.5L715.5,495.5L717.0,495.5L718.5,495.5L720.0,495.5L721.5,495.4L723.0,495.4L724.5,495.4L726.0,495.4L727.5,495.4L729.0,495.3L730.5,495.3L732.0,495.3L733.5,495.3L735.0,495.3L736.5,495.3L738.0,495.2L739.5,495.2L741.0,495.2L742.5,495.2L744.0,495.2L745.5,495.2L747.0,495.2L748.5,495.2L750.0,495.2L751.5,495.2L753.0,495.2L754.5,495.2L756.0,495.3L757.5,495.3L759.0,495.3L760.5,495.4L762.0,495.4L763.5,495.4L765.0,495.5L766.5,495.5L768.0,495.5L769.5,495.6L771.0,495.6L772.5,495.6L774.0,495.6L775.5,495.7L777.0,495.7L778.5,495.7L780.0,495.7L781.5,495.7L783.0,495.7L784.5,495.7L786.0,495.7L787.5,495.7L789.0,495.7L790.5,495.7L792.0,495.7L793.5,495.7L795.0,495.7L796.5,495.7L798.0,495.7L799.5,495.7L801.0,495.7L802.5,495.7L804.0,495.7L805.5,495.7L807.0,495.7L808.5,495.7L810.0,495.7L811.5,495.7L813.0,495.7L814.5,495.7L816.0,495.7L817.5,495.7L819.0,495.7L820.5,495.7L822.0,495.7L823.5,495.7L825.0,495.7L826.5,495.7L828.0,495.7L829.5,495.8L831.0,495.8L832.5,495.8L834.0,495.8L835.5,495.8L837.0,495.8L838.5,495.8L840.0,495.8L841.5,495.9L843.0,495.9L844.5,495.9L846.0,495.9L847.5,495.9L849.0,495.9L850.5,495.9L852.0,496.0L853.5,496.0L855.0,496.0L856.5,496.0L858.0,496.0L859.5,496.0L861.0,496.0L862.5,496.0L864.0,496.0L865.5,496.0L867.0,496.0L868.5,496.0L870.0,496.0L871.5,496.0L873.0,496.0L874.5,496.0L876.0,496.0L877.5,496.0L879.0,496.0L880.5,496.0L882.0,496.0L883.5,496.0L885.0,496.0L886.5,496.0L888.0,496.0L889.5,496.0L891.0,496.0L892.5,496.0L894.0,496.0L895.5,496.0L897.0,496.0L898.5,496.0L900.0,496.0L901.5,496.0L903.0,496.0L904.5,496.0L906.0,496.0L907.5,496.0L909.0,496.0L910.5,496.0L912.0,496.0L913.5,496.0L915.0,496.0L916.5,496.0L918.0,496.0L919.5,496.0L921.0,496.0L922.5,496.0L924.0,496.0L925.5,496.0L927.0,496.0L928.5,496.0L930.0,496.0L931.5,496.0L933.0,496.0L934.5,496.0L936.0,496.0L937.5,496.0L938.5,496.0L938.5,514.5Z" fill="#7ba7cf"/>
<path d="M120.0,514.5L120.0,503.2L121.5,503.2L123.0,503.2L124.5,503.2L126.0,503.2L127.5,503.2L129.0,503.2L130.5,503.2L132.0,503.2L133.5,503.2L135.0,503.2L136.5,503.2L138.0,503.2L139.5,503.2L141.0,503.2L142.5,503.2L144.0,503.2L145.5,503.2L147.0,503.2L148.5,503.2L150.0,503.2L151.5,503.2L153.0,503.2L154.5,503.2L156.0,503.2L157.5,503.2L159.0,503.2L160.5,503.2L162.0,503.2L163.5,503.2L165.0,503.2L166.5,503.2L168.0,503.2L169.5,503.2L171.0,503.3L172.5,503.3L174.0,503.3L175.5,503.3L177.0,503.3L178.5,503.3L180.0,503.3L181.5,503.3L183.0,503.3L184.5,503.3L186.0,503.3L187.5,503.3L189.0,503.3L190.5,503.3L192.0,503.3L193.5,503.3L195.0,503.3L196.5,503.3L198.0,503.3L199.5,503.3L201.0,503.3L202.5,503.3L204.0,503.3L205.5,503.3L207.0,503.3L208.5,503.3L210.0,503.3L211.5,503.3L213.0,503.3L214.5,503.3L216.0,503.3L217.5,503.3L219.0,503.3L220.5,503.3L222.0,503.3L223.5,503.3L225.0,503.3L226.5,503.3L228.0,503.3L229.5,503.3L231.0,503.3L232.5,503.3L234.0,503.3L235.5,503.3L237.0,503.3L238.5,503.4L240.0,503.4L241.5,503.4L243.0,503.4L244.5,503.4L246.0,503.4L247.5,503.4L249.0,503.4L250.5,503.4L252.0,503.4L253.5,503.4L255.0,503.4L256.5,503.4L258.0,503.4L259.5,503.4L261.0,503.4L262.5,503.4L264.0,503.4L265.5,503.4L267.0,503.4L268.5,503.4L270.0,503.4L271.5,503.4L273.0,503.4L274.5,503.4L276.0,503.4L277.5,503.4L279.0,503.4L280.5,503.4L282.0,503.4L283.5,503.4L285.0,503.4L286.5,503.4L288.0,503.4L289.5,503.4L291.0,503.4L292.5,503.4L294.0,503.4L295.5,503.4L297.0,503.4L298.5,503.4L300.0,503.4L301.5,503.4L303.0,503.4L304.5,503.4L306.0,503.4L307.5,503.4L309.0,503.4L310.5,503.4L312.0,503.4L313.5,503.4L315.0,503.4L316.5,503.4L318.0,503.4L319.5,503.4L321.0,503.4L322.5,503.4L324.0,503.4L325.5,503.4L327.0,503.4L328.5,503.4L330.0,503.4L331.5,503.4L333.0,503.4L334.5,503.4L336.0,503.4L337.5,503.4L339.0,503.4L340.5,503.4L342.0,503.4L343.5,503.4L345.0,503.4L346.5,503.4L348.0,503.4L349.5,503.4L351.0,503.4L352.5,503.4L354.0,503.4L355.5,503.4L357.0,503.4L358.5,503.4L360.0,503.4L361.5,503.5L363.0,503.5L364.5,503.5L366.0,503.5L367.5,503.5L369.0,503.5L370.5,503.5L372.0,503.5L373.5,503.5L375.0,503.5L376.5,503.5L378.0,503.5L379.5,503.5L381.0,503.5L382.5,503.5L384.0,503.5L385.5,503.5L387.0,503.5L388.5,503.5L390.0,503.5L391.5,503.5L393.0,503.5L394.5,503.5L396.0,503.5L397.5,503.5L399.0,503.5L400.5,503.5L402.0,503.5L403.5,503.5L405.0,503.5L406.5,503.5L408.0,503.5L409.5,503.5L411.0,503.5L412.5,503.5L414.0,503.5L415.5,503.5L417.0,503.5L418.5,503.5L420.0,503.5L421.5,503.5L423.0,503.5L424.5,503.5L426.0,503.5L427.5,503.5L429.0,503.5L430.5,503.5L432.0,503.5L433.5,503.5L435.0,503.5L436.5,503.5L438.0,503.5L439.5,503.5L441.0,503.5L442.5,503.5L444.0,503.5L445.5,503.5L447.0,503.5L448.5,503.5L450.0,503.5L451.5,503.5L453.0,503.5L454.5,503.5L456.0,503.5L457.5,503.5L459.0,503.5L460.5,503.5L462.0,503.5L463.5,503.5L465.0,503.5L466.5,503.5L468.0,503.5L469.5,503.5L471.0,503.5L472.5,503.5L474.0,503.5L475.5,503.5L477.0,503.5L478.5,503.5L480.0,503.5L481.5,503.5L483.0,503.5L484.5,503.5L486.0,503.5L487.5,503.5L489.0,503.5L490.5,503.5L492.0,503.5L493.5,503.5L495.0,503.5L496.5,503.5L498.0,503.5L499.5,503.5L501.0,503.5L502.5,503.5L504.0,503.5L505.5,503.5L507.0,503.5L508.5,503.5L510.0,503.5L511.5,503.5L513.0,503.5L514.5,503.5L516.0,503.5L517.5,503.5L519.0,503.5L520.5,503.5L522.0,503.5L523.5,503.5L525.0,503.5L526.5,503.5L528.0,503.5L529.5,503.5L531.0,503.5L532.5,503.5L534.0,503.5L535.5,503.5L537.0,503.5L538.5,503.5L540.0,503.5L541.5,503.5L543.0,503.5L544.5,503.5L546.0,503.5L547.5,503.5L549.0,503.5L550.5,503.5L552.0,503.5L553.5,503.5L555.0,503.5L556.5,503.5L558.0,503.5L559.5,503.4L561.0,503.4L562.5,503.3L564.0,503.2L565.5,503.0L567.0,502.9L568.5,502.8L570.0,502.7L571.5,502.6L573.0,502.5L574.5,502.5L576.0,502.5L577.5,502.5L579.0,502.5L580.5,502.5L582.0,502.5L583.5,502.5L585.0,502.5L586.5,502.5L588.0,502.5L589.5,502.5L591.0,502.6L592.5,502.6L594.0,502.6L595.5,502.6L597.0,502.6L598.5,502.6L600.0,502.6L601.5,502.6L603.0,502.7L604.5,502.7L606.0,502.7L607.5,502.7L609.0,502.7L610.5,502.7L612.0,502.8L613.5,502.8L615.0,502.8L616.5,502.8L618.0,502.8L619.5,502.9L621.0,502.9L622.5,502.9L624.0,502.9L625.5,502.9L627.0,502.9L628.5,503.0L630.0,503.0L631.5,503.0L633.0,503.0L634.5,503.0L636.0,503.1L637.5,503.1L639.0,503.1L640.5,503.1L642.0,503.1L643.5,503.1L645.0,503.2L646.5,503.2L648.0,503.2L649.5,503.2L651.0,503.2L652.5,503.2L654.0,503.3L655.5,503.3L657.0,503.3L658.5,503.3L660.0,503.3L661.5,503.4L663.0,503.4L664.5,503.4L666.0,503.4L667.5,503.4L669.0,503.4L670.5,503.5L672.0,503.5L673.5,503.5L675.0,503.5L676.5,503.5L678.0,503.5L679.5,503.5L681.0,503.5L682.5,503.5L684.0,503.5L685.5,503.4L687.0,503.4L688.5,503.4L690.0,503.4L691.5,503.4L693.0,503.4L694.5,503.3L696.0,503.3L697.5,503.3L699.0,503.3L700.5,503.2L702.0,503.2L703.5,503.2L705.0,503.1L706.5,503.1L708.0,503.1L709.5,503.1L711.0,503.0L712.5,503.0L714.0,503.0L715.5,503.0L717.0,502.9L718.5,502.9L720.0,502.9L721.5,502.9L723.0,502.9L724.5,502.8L726.0,502.8L727.5,502.8L729.0,502.8L730.5,502.8L732.0,502.8L733.5,502.8L735.0,502.8L736.5,502.8L738.0,502.9L739.5,502.9L741.0,502.9L742.5,502.9L744.0,502.9L745.5,502.9L747.0,503.0L748.5,503.0L750.0,503.0L751.5,503.0L753.0,503.1L754.5,503.1L756.0,503.1L757.5,503.1L759.0,503.1L760.5,503.1L762.0,503.1L763.5,503.1L765.0,503.1L766.5,503.1L768.0,503.1L769.5,503.1L771.0,503.1L772.5,503.1L774.0,503.1L775.5,503.1L777.0,503.1L778.5,503.1L780.0,503.1L781.5,503.1L783.0,503.1L784.5,503.1L786.0,503.1L787.5,503.1L789.0,503.1L790.5,503.1L792.0,503.1L793.5,503.1L795.0,503.1L796.5,503.1L798.0,503.1L799.5,503.1L801.0,503.1L802.5,503.1L804.0,503.1L805.5,503.1L807.0,503.1L808.5,503.1L810.0,503.1L811.5,503.1L813.0,503.1L814.5,503.1L816.0,503.1L817.5,503.1L819.0,503.1L820.5,503.1L822.0,503.1L823.5,503.1L825.0,503.1L826.5,503.1L828.0,503.1L829.5,503.0L831.0,503.0L832.5,503.0L834.0,503.0L835.5,503.0L837.0,503.0L838.5,503.0L840.0,503.0L841.5,503.0L843.0,503.0L844.5,503.0L846.0,503.0L847.5,502.9L849.0,502.9L850.5,502.9L852.0,502.9L853.5,502.9L855.0,502.9L856.5,502.9L858.0,502.9L859.5,502.9L861.0,502.9L862.5,502.9L864.0,502.9L865.5,502.9L867.0,502.9L868.5,502.8L870.0,502.8L871.5,502.8L873.0,502.8L874.5,502.8L876.0,502.8L877.5,502.8L879.0,502.8L880.5,502.8L882.0,502.8L883.5,502.8L885.0,502.8L886.5,502.8L888.0,502.8L889.5,502.8L891.0,502.8L892.5,502.8L894.0,502.8L895.5,502.8L897.0,502.8L898.5,502.8L900.0,502.8L901.5,502.8L903.0,502.8L904.5,502.8L906.0,502.8L907.5,502.8L909.0,502.8L910.5,502.8L912.0,502.8L913.5,502.8L915.0,502.8L916.5,502.8L918.0,502.8L919.5,502.8L921.0,502.8L922.5,502.8L924.0,502.8L925.5,502.8L927.0,502.8L928.5,502.8L930.0,502.8L931.5,502.8L933.0,502.8L934.5,502.8L936.0,502.8L937.5,502.8L938.5,502.8L938.5,514.5Z" fill="#477a4f"/>
<g fill="none" stroke="#ffffff" stroke-opacity="0.35" stroke-width="0.8"><path d="M120.0,484.5L121.5,484.5L123.0,484.7L124.5,484.8L126.0,485.0L127.5,485.2L129.0,485.4L130.5,485.7L132.0,486.1L133.5,486.5L135.0,486.7L136.5,486.8L138.0,486.8L139.5,486.6L141.0,486.3L142.5,486.0L144.0,485.9L145.5,485.9L147.0,486.1L148.5,486.5L150.0,487.0L151.5,487.5L153.0,488.0L154.5,488.5L156.0,488.9L157.5,489.3L159.0,489.8L160.5,490.1L162.0,490.4L163.5,490.6L165.0,490.7L166.5,490.7L168.0,490.6L169.5,490.5L171.0,490.3L172.5,490.2L174.0,490.1L175.5,490.0L177.0,489.9L178.5,489.9L180.0,489.9L181.5,489.9L183.0,490.0L184.5,490.0L186.0,490.1L187.5,490.2L189.0,490.2L190.5,490.3L192.0,490.4L193.5,490.5L195.0,490.6L196.5,490.8L198.0,490.9L199.5,491.0L201.0,491.0L202.5,491.1L204.0,491.2L205.5,491.2L207.0,491.3L208.5,491.3L210.0,491.3L211.5,491.4L213.0,491.4L214.5,491.4L216.0,491.3L217.5,491.3L219.0,491.1L220.5,491.0L222.0,490.8L223.5,490.6L225.0,490.5L226.5,490.3L228.0,490.2L229.5,490.1L231.0,489.9L232.5,489.8L234.0,489.7L235.5,489.6L237.0,489.4L238.5,489.3L240.0,489.2L241.5,489.2L243.0,489.1L244.5,489.1L246.0,489.1L247.5,489.1L249.0,489.2L250.5,489.2L252.0,489.3L253.5,489.3L255.0,489.4L256.5,489.5L258.0,489.6L259.5,489.8L261.0,489.9L262.5,490.1L264.0,490.2L265.5,490.4L267.0,490.6L268.5,490.8L270.0,491.0L271.5,491.2L273.0,491.4L274.5,491.6L276.0,491.8L277.5,492.1L279.0,492.3L280.5,492.6L282.0,492.8L283.5,493.1L285.0,493.4L286.5,493.8L288.0,494.1L289.5,494.4L291.0,494.6L292.5,494.9L294.0,495.2L295.5,495.4L297.0,495.7L298.5,495.8L300.0,496.0L301.5,496.0L303.0,496.0L304.5,496.0L306.0,496.0L307.5,496.0L309.0,496.0L310.5,496.0L312.0,496.0L313.5,496.0L315.0,496.0L316.5,496.1L318.0,496.1L319.5,496.1L321.0,496.1L322.5,496.1L324.0,496.2L325.5,496.2L327.0,496.2L328.5,496.2L330.0,496.3L331.5,496.3L333.0,496.3L334.5,496.4L336.0,496.4L337.5,496.4L339.0,496.5L340.5,496.6L342.0,496.6L343.5,496.7L345.0,496.7L346.5,496.8L348.0,496.8L349.5,496.8L351.0,496.8L352.5,496.8L354.0,496.8L355.5,496.8L357.0,496.7L358.5,496.7L360.0,496.6L361.5,496.6L363.0,496.5L364.5,496.5L366.0,496.4L367.5,496.4L369.0,496.4L370.5,496.4L372.0,496.4L373.5,496.4L375.0,496.4L376.5,496.4L378.0,496.4L379.5,496.4L381.0,496.4L382.5,496.4L384.0,496.4L385.5,496.4L387.0,496.4L388.5,496.4L390.0,496.4L391.5,496.4L393.0,496.5L394.5,496.5L396.0,496.6L397.5,496.7L399.0,496.7L400.5,496.8L402.0,496.8L403.5,496.8L405.0,496.8L406.5,496.8L408.0,496.8L409.5,496.8L411.0,496.8L412.5,496.7L414.0,496.7L415.5,496.6L417.0,496.6L418.5,496.6L420.0,496.5L421.5,496.5L423.0,496.5L424.5,496.5L426.0,496.5L427.5,496.5L429.0,496.4L430.5,496.4L432.0,496.4L433.5,496.4L435.0,496.4L436.5,496.4L438.0,496.4L439.5,496.3L441.0,496.3L442.5,496.3L444.0,496.2L445.5,496.2L447.0,496.1L448.5,496.1L450.0,496.1L451.5,496.0L453.0,496.0L454.5,496.0L456.0,496.0L457.5,496.0L459.0,496.0L460.5,496.0L462.0,496.0L463.5,496.1L465.0,496.1L466.5,496.1L468.0,496.1L469.5,496.1L471.0,496.1L472.5,496.1L474.0,496.1L475.5,496.1L477.0,496.2L478.5,496.2L480.0,496.2L481.5,496.2L483.0,496.2L484.5,496.2L486.0,496.2L487.5,496.2L489.0,496.3L490.5,496.3L492.0,496.3L493.5,496.3L495.0,496.3L496.5,496.3L498.0,496.3L499.5,496.3L501.0,496.3L502.5,496.3L504.0,496.4L505.5,496.4L507.0,496.4L508.5,496.4L510.0,496.4L511.5,496.4L513.0,496.4L514.5,496.4L516.0,496.4L517.5,496.4L519.0,496.4L520.5,496.4L522.0,496.4L523.5,496.4L525.0,496.4L526.5,496.4L528.0,496.4L529.5,496.4L531.0,496.4L532.5,496.4L534.0,496.3L535.5,496.3L537.0,496.3L538.5,496.2L540.0,496.1L541.5,496.1L543.0,496.0L544.5,495.8L546.0,495.7L547.5,495.4L549.0,495.1L550.5,494.6L552.0,494.0L553.5,493.4L555.0,492.8L556.5,492.3L558.0,491.8L559.5,491.4L561.0,491.0L562.5,490.6L564.0,490.2L565.5,489.9L567.0,489.7L568.5,489.5L570.0,489.4L571.5,489.3L573.0,489.3L574.5,489.2L576.0,489.2L577.5,489.1L579.0,489.1L580.5,489.1L582.0,489.1L583.5,489.1L585.0,489.1L586.5,489.2L588.0,489.3L589.5,489.4L591.0,489.5L592.5,489.6L594.0,489.7L595.5,489.8L597.0,489.9L598.5,490.0L600.0,490.1L601.5,490.2L603.0,490.2L604.5,490.2L606.0,490.3L607.5,490.3L609.0,490.4L610.5,490.4L612.0,490.4L613.5,490.5L615.0,490.5L616.5,490.6L618.0,490.7L619.5,490.7L621.0,490.8L622.5,490.9L624.0,491.0L625.5,491.1L627.0,491.2L628.5,491.3L630.0,491.5L631.5,491.6L633.0,491.7L634.5,491.8L636.0,492.0L637.5,492.1L639.0,492.3L640.5,492.4L642.0,492.6L643.5,492.7L645.0,492.9L646.5,493.1L648.0,493.2L649.5,493.4L651.0,493.6L652.5,493.7L654.0,493.9L655.5,494.1L657.0,494.3L658.5,494.5L660.0,494.7L661.5,494.9L663.0,495.0L664.5,495.0L666.0,495.1L667.5,495.1L669.0,495.1L670.5,495.1L672.0,495.1L673.5,495.1L675.0,495.1L676.5,495.1L678.0,495.1L679.5,495.1L681.0,495.1L682.5,495.1L684.0,495.1L685.5,495.1L687.0,495.1L688.5,495.1L690.0,495.1L691.5,495.1L693.0,495.1L694.5,495.1L696.0,495.1L697.5,495.1L699.0,495.1L700.5,495.1L702.0,495.1L703.5,495.0L705.0,494.9L706.5,494.8L708.0,494.8L709.5,494.7L711.0,494.7L712.5,494.7L714.0,494.7L715.5,494.7L717.0,494.7L718.5,494.7L720.0,494.7L721.5,494.7L723.0,494.7L724.5,494.7L726.0,494.7L727.5,494.7L729.0,494.7L730.5,494.7L732.0,494.7L733.5,494.7L735.0,494.7L736.5,494.7L738.0,494.7L739.5,494.7L741.0,494.7L742.5,494.7L744.0,494.7L745.5,494.7L747.0,494.7L748.5,494.7L750.0,494.7L751.5,494.7L753.0,494.7L754.5,494.8L756.0,494.8L757.5,494.8L759.0,494.8L760.5,494.9L762.0,494.9L763.5,494.9L765.0,495.0L766.5,495.0L768.0,495.0L769.5,495.1L771.0,495.1L772.5,495.1L774.0,495.1L775.5,495.2L777.0,495.2L778.5,495.2L780.0,495.2L781.5,495.2L783.0,495.2L784.5,495.2L786.0,495.2L787.5,495.2L789.0,495.1L790.5,495.1L792.0,495.1L793.5,495.0L795.0,495.0L796.5,495.0L798.0,494.9L799.5,494.9L801.0,494.9L802.5,494.8L804.0,494.8L805.5,494.8L807.0,494.8L808.5,494.7L810.0,494.7L811.5,494.7L813.0,494.7L814.5,494.7L816.0,494.7L817.5,494.7L819.0,494.7L820.5,494.7L822.0,494.7L823.5,494.7L825.0,494.7L826.5,494.7L828.0,494.7L829.5,494.7L831.0,494.7L832.5,494.7L834.0,494.7L835.5,494.7L837.0,494.7L838.5,494.7L840.0,494.7L841.5,494.7L843.0,494.7L844.5,494.7L846.0,494.7L847.5,494.7L849.0,494.7L850.5,494.7L852.0,494.7L853.5,494.7L855.0,494.7L856.5,494.7L858.0,494.7L859.5,494.7L861.0,494.7L862.5,494.7L864.0,494.7L865.5,494.7L867.0,494.7L868.5,494.7L870.0,494.7L871.5,494.7L873.0,494.7L874.5,494.6L876.0,494.6L877.5,494.6L879.0,494.5L880.5,494.5L882.0,494.4L883.5,494.4L885.0,494.4L886.5,494.3L888.0,494.3L889.5,494.2L891.0,494.2L892.5,494.2L894.0,494.1L895.5,494.1L897.0,494.1L898.5,494.1L900.0,494.0L901.5,494.0L903.0,494.0L904.5,494.1L906.0,494.1L907.5,494.1L909.0,494.1L910.5,494.1L912.0,494.1L913.5,494.2L915.0,494.2L916.5,494.3L918.0,494.3L919.5,494.3L921.0,494.4L922.5,494.4L924.0,494.5L925.5,494.6L927.0,494.6L928.5,494.7L930.0,494.8L931.5,494.8L933.0,494.9L934.5,495.0L936.0,495.1L937.5,495.1L938.5,495.2"/><path d="M120.0,496.9L121.5,496.9L123.0,496.9L124.5,496.9L126.0,496.9L127.5,496.9L129.0,496.9L130.5,496.9L132.0,496.8L133.5,496.8L135.0,496.8L136.5,496.7L138.0,496.7L139.5,496.6L141.0,496.6L142.5,496.5L144.0,496.4L145.5,496.4L147.0,496.4L148.5,496.4L150.0,496.4L151.5,496.4L153.0,496.4L154.5,496.4L156.0,496.4L157.5,496.4L159.0,496.4L160.5,496.4L162.0,496.4L163.5,496.4L165.0,496.4L166.5,496.3L168.0,496.3L169.5,496.3L171.0,496.2L172.5,496.2L174.0,496.2L175.5,496.1L177.0,496.1L178.5,496.1L180.0,496.0L181.5,496.0L183.0,496.0L184.5,496.0L186.0,496.0L187.5,496.0L189.0,496.0L190.5,496.0L192.0,496.0L193.5,496.0L195.0,496.0L196.5,496.0L198.0,496.0L199.5,496.0L201.0,496.1L202.5,496.1L204.0,496.1L205.5,496.2L207.0,496.2L208.5,496.3L210.0,496.3L211.5,496.3L213.0,496.3L214.5,496.4L216.0,496.4L217.5,496.4L219.0,496.4L220.5,496.4L222.0,496.4L223.5,496.4L225.0,496.4L226.5,496.4L228.0,496.4L229.5,496.4L231.0,496.4L232.5,496.4L234.0,496.4L235.5,496.4L237.0,496.4L238.5,496.4L240.0,496.4L241.5,496.4L243.0,496.5L244.5,496.5L246.0,496.5L247.5,496.5L249.0,496.5L250.5,496.5L252.0,496.5L253.5,496.5L255.0,496.5L256.5,496.5L258.0,496.5L259.5,496.4L261.0,496.4L262.5,496.4L264.0,496.4L265.5,496.4L267.0,496.4L268.5,496.4L270.0,496.4L271.5,496.4L273.0,496.4L274.5,496.4L276.0,496.4L277.5,496.4L279.0,496.4L280.5,496.4L282.0,496.4L283.5,496.4L285.0,496.4L286.5,496.4L288.0,496.4L289.5,496.4L291.0,496.5L292.5,496.5L294.0,496.6L295.5,496.6L297.0,496.7L298.5,496.8L300.0,496.8L301.5,496.9L303.0,496.9L304.5,497.0L306.0,497.0L307.5,497.1L309.0,497.1L310.5,497.1L312.0,497.2L313.5,497.2L315.0,497.3L316.5,497.3L318.0,497.4L319.5,497.4L321.0,497.4L322.5,497.5L324.0,497.5L325.5,497.6L327.0,497.6L328.5,497.6L330.0,497.6L331.5,497.7L333.0,497.7L334.5,497.7L336.0,497.7L337.5,497.7L339.0,497.7L340.5,497.7L342.0,497.7L343.5,497.7L345.0,497.7L346.5,497.7L348.0,497.7L349.5,497.7L351.0,497.7L352.5,497.7L354.0,497.7L355.5,497.6L357.0,497.6L358.5,497.6L360.0,497.5L361.5,497.5L363.0,497.5L364.5,497.4L366.0,497.4L367.5,497.4L369.0,497.4L370.5,497.4L372.0,497.4L373.5,497.4L375.0,497.4L376.5,497.4L378.0,497.4L379.5,497.4L381.0,497.4L382.5,497.4L384.0,497.4L385.5,497.4L387.0,497.4L388.5,497.4L390.0,497.4L391.5,497.4L393.0,497.4L394.5,497.4L396.0,497.4L397.5,497.4L399.0,497.4L400.5,497.4L402.0,497.4L403.5,497.4L405.0,497.4L406.5,497.4L408.0,497.4L409.5,497.4L411.0,497.4L412.5,497.4L414.0,497.4L415.5,497.4L417.0,497.4L418.5,497.4L420.0,497.4L421.5,497.4L423.0,497.4L424.5,497.4L426.0,497.4L427.5,497.4L429.0,497.4L430.5,497.4L432.0,497.4L433.5,497.4L435.0,497.4L436.5,497.4L438.0,497.4L439.5,497.4L441.0,497.4L442.5,497.4L444.0,497.4L445.5,497.4L447.0,497.4L448.5,497.4L450.0,497.4L451.5,497.4L453.0,497.4L454.5,497.4L456.0,497.4L457.5,497.4L459.0,497.4L460.5,497.4L462.0,497.4L463.5,497.4L465.0,497.4L466.5,497.4L468.0,497.4L469.5,497.4L471.0,497.4L472.5,497.4L474.0,497.4L475.5,497.4L477.0,497.4L478.5,497.4L480.0,497.4L481.5,497.4L483.0,497.4L484.5,497.4L486.0,497.4L487.5,497.4L489.0,497.4L490.5,497.4L492.0,497.4L493.5,497.4L495.0,497.4L496.5,497.4L498.0,497.4L499.5,497.4L501.0,497.4L502.5,497.4L504.0,497.4L505.5,497.4L507.0,497.4L508.5,497.4L510.0,497.4L511.5,497.4L513.0,497.4L514.5,497.4L516.0,497.4L517.5,497.4L519.0,497.4L520.5,497.4L522.0,497.4L523.5,497.4L525.0,497.4L526.5,497.4L528.0,497.4L529.5,497.4L531.0,497.4L532.5,497.4L534.0,497.4L535.5,497.4L537.0,497.4L538.5,497.4L540.0,497.4L541.5,497.4L543.0,497.4L544.5,497.4L546.0,497.4L547.5,497.4L549.0,497.4L550.5,497.4L552.0,497.4L553.5,497.4L555.0,497.4L556.5,497.4L558.0,497.3L559.5,497.3L561.0,497.3L562.5,497.3L564.0,497.2L565.5,497.2L567.0,497.1L568.5,497.1L570.0,497.0L571.5,496.9L573.0,496.9L574.5,496.9L576.0,496.8L577.5,496.8L579.0,496.7L580.5,496.7L582.0,496.6L583.5,496.6L585.0,496.6L586.5,496.5L588.0,496.5L589.5,496.4L591.0,496.4L592.5,496.3L594.0,496.3L595.5,496.3L597.0,496.2L598.5,496.2L600.0,496.1L601.5,496.1L603.0,496.1L604.5,496.0L606.0,496.0L607.5,496.0L609.0,495.9L610.5,495.9L612.0,495.9L613.5,495.8L615.0,495.8L616.5,495.8L618.0,495.8L619.5,495.7L621.0,495.7L622.5,495.7L624.0,495.7L625.5,495.7L627.0,495.7L628.5,495.7L630.0,495.7L631.5,495.7L633.0,495.7L634.5,495.7L636.0,495.7L637.5,495.8L639.0,495.8L640.5,495.8L642.0,495.8L643.5,495.8L645.0,495.9L646.5,495.9L648.0,495.9L649.5,495.9L651.0,496.0L652.5,496.0L654.0,496.0L655.5,496.0L657.0,496.0L658.5,496.0L660.0,496.0L661.5,496.0L663.0,496.0L664.5,496.0L666.0,496.0L667.5,495.9L669.0,495.9L670.5,495.8L672.0,495.8L673.5,495.8L675.0,495.7L676.5,495.7L678.0,495.7L679.5,495.7L681.0,495.7L682.5,495.7L684.0,495.7L685.5,495.7L687.0,495.7L688.5,495.7L690.0,495.7L691.5,495.7L693.0,495.7L694.5,495.7L696.0,495.7L697.5,495.7L699.0,495.7L700.5,495.7L702.0,495.7L703.5,495.7L705.0,495.6L706.5,495.6L708.0,495.6L709.5,495.6L711.0,495.6L712.5,495.6L714.0,495.5L715.5,495.5L717.0,495.5L718.5,495.5L720.0,495.5L721.5,495.4L723.0,495.4L724.5,495.4L726.0,495.4L727.5,495.4L729.0,495.3L730.5,495.3L732.0,495.3L733.5,495.3L735.0,495.3L736.5,495.3L738.0,495.2L739.5,495.2L741.0,495.2L742.5,495.2L744.0,495.2L745.5,495.2L747.0,495.2L748.5,495.2L750.0,495.2L751.5,495.2L753.0,495.2L754.5,495.2L756.0,495.3L757.5,495.3L759.0,495.3L760.5,495.4L762.0,495.4L763.5,495.4L765.0,495.5L766.5,495.5L768.0,495.5L769.5,495.6L771.0,495.6L772.5,495.6L774.0,495.6L775.5,495.7L777.0,495.7L778.5,495.7L780.0,495.7L781.5,495.7L783.0,495.7L784.5,495.7L786.0,495.7L787.5,495.7L789.0,495.7L790.5,495.7L792.0,495.7L793.5,495.7L795.0,495.7L796.5,495.7L798.0,495.7L799.5,495.7L801.0,495.7L802.5,495.7L804.0,495.7L805.5,495.7L807.0,495.7L808.5,495.7L810.0,495.7L811.5,495.7L813.0,495.7L814.5,495.7L816.0,495.7L817.5,495.7L819.0,495.7L820.5,495.7L822.0,495.7L823.5,495.7L825.0,495.7L826.5,495.7L828.0,495.7L829.5,495.8L831.0,495.8L832.5,495.8L834.0,495.8L835.5,495.8L837.0,495.8L838.5,495.8L840.0,495.8L841.5,495.9L843.0,495.9L844.5,495.9L846.0,495.9L847.5,495.9L849.0,495.9L850.5,495.9L852.0,496.0L853.5,496.0L855.0,496.0L856.5,496.0L858.0,496.0L859.5,496.0L861.0,496.0L862.5,496.0L864.0,496.0L865.5,496.0L867.0,496.0L868.5,496.0L870.0,496.0L871.5,496.0L873.0,496.0L874.5,496.0L876.0,496.0L877.5,496.0L879.0,496.0L880.5,496.0L882.0,496.0L883.5,496.0L885.0,496.0L886.5,496.0L888.0,496.0L889.5,496.0L891.0,496.0L892.5,496.0L894.0,496.0L895.5,496.0L897.0,496.0L898.5,496.0L900.0,496.0L901.5,496.0L903.0,496.0L904.5,496.0L906.0,496.0L907.5,496.0L909.0,496.0L910.5,496.0L912.0,496.0L913.5,496.0L915.0,496.0L916.5,496.0L918.0,496.0L919.5,496.0L921.0,496.0L922.5,496.0L924.0,496.0L925.5,496.0L927.0,496.0L928.5,496.0L930.0,496.0L931.5,496.0L933.0,496.0L934.5,496.0L936.0,496.0L937.5,496.0L938.5,496.0"/></g>
<path d="M120.0,408.7L121.5,409.4L123.0,410.5L124.5,411.4L126.0,412.4L127.5,413.3L129.0,414.3L130.5,415.2L132.0,416.0L133.5,416.5L135.0,416.7L136.5,416.4L138.0,415.8L139.5,415.0L141.0,414.2L142.5,413.6L144.0,413.4L145.5,413.6L147.0,414.1L148.5,414.5L150.0,414.7L151.5,414.6L153.0,414.2L154.5,413.5L156.0,412.4L157.5,410.8L159.0,408.7L160.5,406.2L162.0,403.3L163.5,400.2L165.0,397.1L166.5,394.3L168.0,391.8L169.5,389.5L171.0,387.5L172.5,386.0L174.0,384.9L175.5,384.3L177.0,383.9L178.5,384.0L180.0,384.4L181.5,385.0L183.0,385.3L184.5,385.3L186.0,385.1L187.5,385.0L189.0,385.1L190.5,385.7L192.0,386.5L193.5,387.5L195.0,388.6L196.5,389.5L198.0,390.1L199.5,390.3L201.0,390.4L202.5,390.4L204.0,390.4L205.5,390.6L207.0,391.0L208.5,391.6L210.0,392.3L211.5,393.1L213.0,394.1L214.5,395.1L216.0,396.2L217.5,397.5L219.0,399.0L220.5,400.3L222.0,401.3L223.5,401.7L225.0,401.5L226.5,401.1L228.0,401.1L229.5,401.5L231.0,402.3L232.5,403.3L234.0,404.3L235.5,405.1L237.0,405.9L238.5,406.5L240.0,406.8L241.5,406.8L243.0,406.6L244.5,406.3L246.0,406.2L247.5,406.3L249.0,406.5L250.5,406.7L252.0,406.8L253.5,406.5L255.0,406.0L256.5,405.2L258.0,404.1L259.5,402.7L261.0,400.8L262.5,398.1L264.0,394.6L265.5,390.6L267.0,386.2L268.5,381.7L270.0,377.2L271.5,372.8L273.0,368.8L274.5,365.2L276.0,362.3L277.5,360.4L279.0,359.1L280.5,357.9L282.0,356.3L283.5,354.3L285.0,352.3L286.5,350.7L288.0,349.5L289.5,348.7L291.0,348.1L292.5,347.9L294.0,348.0L295.5,348.3L297.0,348.7L298.5,349.3L300.0,350.1L301.5,351.1L303.0,352.1L304.5,353.0L306.0,353.7L307.5,354.2L309.0,354.7L310.5,355.4L312.0,356.2L313.5,357.3L315.0,358.5L316.5,359.6L318.0,360.6L319.5,361.3L321.0,362.0L322.5,362.6L324.0,363.2L325.5,363.9L327.0,364.8L328.5,365.8L330.0,367.2L331.5,368.9L333.0,371.0L334.5,373.2L336.0,375.3L337.5,377.5L339.0,379.5L340.5,381.4L342.0,383.1L343.5,384.6L345.0,386.1L346.5,388.1L348.0,390.7L349.5,393.5L351.0,396.4L352.5,399.1L354.0,401.3L355.5,402.9L357.0,403.7L358.5,404.2L360.0,404.3L361.5,404.2L363.0,403.9L364.5,403.4L366.0,403.0L367.5,402.6L369.0,402.3L370.5,401.9L372.0,401.5L373.5,400.9L375.0,400.0L376.5,398.7L378.0,397.0L379.5,394.6L381.0,391.5L382.5,387.8L384.0,383.6L385.5,379.0L387.0,374.6L388.5,370.7L390.0,367.4L391.5,364.6L393.0,362.2L394.5,360.2L396.0,358.6L397.5,357.4L399.0,356.1L400.5,354.4L402.0,352.4L403.5,350.5L405.0,348.8L406.5,347.6L408.0,346.8L409.5,346.3L411.0,346.2L412.5,346.2L414.0,346.3L415.5,346.3L417.0,346.4L418.5,346.8L420.0,347.3L421.5,348.1L423.0,349.0L424.5,349.7L426.0,350.4L427.5,351.4L429.0,352.9L430.5,354.8L432.0,356.4L433.5,357.2L435.0,357.5L436.5,357.6L438.0,358.0L439.5,358.7L441.0,359.8L442.5,361.2L444.0,362.6L445.5,364.1L447.0,365.5L448.5,367.1L450.0,368.9L451.5,370.9L453.0,373.0L454.5,375.1L456.0,377.0L457.5,378.6L459.0,380.1L460.5,381.5L462.0,383.2L463.5,385.3L465.0,387.8L466.5,390.3L468.0,392.2L469.5,393.6L471.0,394.6L472.5,395.5L474.0,396.4L475.5,397.3L477.0,398.2L478.5,399.0L480.0,399.7L481.5,400.1L483.0,400.1L484.5,399.8L486.0,399.2L487.5,398.4L489.0,397.5L490.5,396.6L492.0,395.5L493.5,394.3L495.0,392.8L496.5,391.0L498.0,388.6L499.5,385.6L501.0,382.3L502.5,379.0L504.0,375.5L505.5,372.1L507.0,368.8L508.5,365.7L510.0,362.7L511.5,360.0L513.0,357.4L514.5,355.0L516.0,352.8L517.5,350.9L519.0,349.0L520.5,347.1L522.0,345.5L523.5,344.2L525.0,343.3L526.5,343.0L528.0,343.0L529.5,343.2L531.0,343.5L532.5,343.9L534.0,344.5L535.5,345.3L537.0,346.3L538.5,347.4L540.0,348.6L541.5,350.0L543.0,351.4L544.5,352.8L546.0,353.7L547.5,354.3L549.0,354.6L550.5,354.9L552.0,355.1L553.5,355.4L555.0,355.7L556.5,356.1L558.0,356.6L559.5,357.1L561.0,357.6L562.5,358.3L564.0,359.1L565.5,360.1L567.0,361.6L568.5,363.5L570.0,365.7L571.5,367.9L573.0,370.0L574.5,371.9L576.0,373.8L577.5,375.6L579.0,377.6L580.5,379.8L582.0,382.2L583.5,384.6L585.0,386.6L586.5,388.3L588.0,389.7L589.5,390.8L591.0,391.9L592.5,392.8L594.0,393.6L595.5,394.3L597.0,395.1L598.5,395.7L600.0,396.3L601.5,396.7L603.0,396.8L604.5,396.6L606.0,395.8L607.5,394.8L609.0,393.6L610.5,392.4L612.0,391.3L613.5,390.0L615.0,388.2L616.5,385.5L618.0,382.0L619.5,378.1L621.0,374.3L622.5,370.6L624.0,367.2L625.5,363.7L627.0,360.5L628.5,357.8L630.0,355.4L631.5,353.4L633.0,351.7L634.5,350.2L636.0,348.8L637.5,347.7L639.0,346.8L640.5,345.9L642.0,345.1L643.5,344.3L645.0,343.8L646.5,343.4L648.0,343.3L649.5,343.3L651.0,343.5L652.5,343.9L654.0,344.4L655.5,345.3L657.0,346.5L658.5,347.9L660.0,349.1L661.5,350.1L663.0,350.8L664.5,351.5L666.0,352.2L667.5,353.0L669.0,353.8L670.5,354.6L672.0,355.6L673.5,356.5L675.0,357.4L676.5,358.3L678.0,359.1L679.5,359.9L681.0,360.7L682.5,361.7L684.0,362.8L685.5,364.4L687.0,366.5L688.5,368.9L690.0,371.3L691.5,373.6L693.0,375.6L694.5,377.5L696.0,379.4L697.5,381.3L699.0,383.4L700.5,385.8L702.0,388.6L703.5,391.4L705.0,394.0L706.5,395.9L708.0,397.0L709.5,397.6L711.0,398.0L712.5,398.4L714.0,398.6L715.5,398.8L717.0,399.0L718.5,399.2L720.0,399.3L721.5,399.4L723.0,399.4L724.5,399.2L726.0,398.7L727.5,397.8L729.0,396.7L730.5,395.4L732.0,393.8L733.5,391.6L735.0,388.7L736.5,385.4L738.0,382.0L739.5,378.7L741.0,375.5L742.5,372.4L744.0,369.3L745.5,366.4L747.0,363.9L748.5,361.9L750.0,360.4L751.5,359.1L753.0,358.0L754.5,356.9L756.0,355.8L757.5,354.6L759.0,353.3L760.5,352.2L762.0,351.7L763.5,351.8L765.0,352.3L766.5,353.0L768.0,353.9L769.5,354.7L771.0,355.4L772.5,356.1L774.0,356.9L775.5,357.6L777.0,358.4L778.5,359.3L780.0,360.2L781.5,361.2L783.0,362.2L784.5,363.0L786.0,363.6L787.5,364.1L789.0,364.6L790.5,365.0L792.0,365.5L793.5,366.0L795.0,366.6L796.5,367.4L798.0,368.2L799.5,369.3L801.0,370.6L802.5,372.5L804.0,374.9L805.5,377.6L807.0,380.0L808.5,382.1L810.0,383.7L811.5,385.1L813.0,386.5L814.5,388.0L816.0,389.7L817.5,391.7L819.0,394.0L820.5,396.4L822.0,398.5L823.5,400.5L825.0,402.2L826.5,403.8L828.0,405.2L829.5,406.6L831.0,407.8L832.5,409.0L834.0,410.1L835.5,410.8L837.0,411.3L838.5,411.5L840.0,411.6L841.5,411.6L843.0,411.3L844.5,411.0L846.0,410.5L847.5,409.9L849.0,409.3L850.5,408.6L852.0,407.8L853.5,406.9L855.0,405.7L856.5,404.4L858.0,402.9L859.5,401.0L861.0,398.8L862.5,396.0L864.0,392.7L865.5,389.5L867.0,386.5L868.5,383.6L870.0,380.9L871.5,378.6L873.0,376.7L874.5,375.2L876.0,374.0L877.5,373.0L879.0,372.3L880.5,371.9L882.0,371.6L883.5,371.3L885.0,371.1L886.5,371.0L888.0,371.0L889.5,371.4L891.0,372.3L892.5,373.5L894.0,374.6L895.5,375.3L897.0,375.9L898.5,376.4L900.0,376.9L901.5,377.4L903.0,378.0L904.5,378.5L906.0,379.1L907.5,379.8L909.0,380.6L910.5,381.5L912.0,382.6L913.5,383.9L915.0,385.3L916.5,386.7L918.0,388.2L919.5,389.6L921.0,391.1L922.5,392.7L924.0,394.2L925.5,395.8L927.0,397.3L928.5,398.6L930.0,399.6L931.5,400.5L933.0,401.4L934.5,402.5L936.0,404.0L937.5,405.4L938.5,406.4" fill="none" stroke="#dc4096" stroke-width="2" stroke-linejoin="round"/>
<g stroke="#ccd6eb" stroke-width="1"><line x1="112" y1="514.5" x2="947" y2="514.5"/><line x1="119.3" y1="514.5" x2="119.3" y2="523.5"/><line x1="178.1" y1="514.5" x2="178.1" y2="523.5"/><line x1="236.9" y1="514.5" x2="236.9" y2="523.5"/><line x1="295.7" y1="514.5" x2="295.7" y2="523.5"/><line x1="354.5" y1="514.5" x2="354.5" y2="523.5"/><line x1="413.3" y1="514.5" x2="413.3" y2="523.5"/><line x1="472.1" y1="514.5" x2="472.1" y2="523.5"/><line x1="530.9" y1="514.5" x2="530.9" y2="523.5"/><line x1="589.7" y1="514.5" x2="589.7" y2="523.5"/><line x1="648.5" y1="514.5" x2="648.5" y2="523.5"/><line x1="707.3" y1="514.5" x2="707.3" y2="523.5"/><line x1="766.1" y1="514.5" x2="766.1" y2="523.5"/><line x1="824.9" y1="514.5" x2="824.9" y2="523.5"/><line x1="883.7" y1="514.5" x2="883.7" y2="523.5"/><line x1="942.5" y1="514.5" x2="942.5" y2="523.5"/></g>
<g font-size="9.6" fill="#5c5c5c"><text x="120.3" y="531.4" text-anchor="middle" letter-spacing="0.15">14. Juni</text><text x="179.1" y="531.4" text-anchor="middle" letter-spacing="0.15">12:00</text><text x="237.9" y="531.4" text-anchor="middle" letter-spacing="0.15">15. Juni</text><text x="296.7" y="531.4" text-anchor="middle" letter-spacing="0.15">12:00</text><text x="355.5" y="531.4" text-anchor="middle" letter-spacing="0.15">16. Juni</text><text x="414.3" y="531.4" text-anchor="middle" letter-spacing="0.15">12:00</text><text x="473.1" y="531.4" text-anchor="middle" letter-spacing="0.15">17. Juni</text><text x="531.9" y="531.4" text-anchor="middle" letter-spacing="0.15">12:00</text><text x="590.7" y="531.4" text-anchor="middle" letter-spacing="0.15">18. Juni</text><text x="649.5" y="531.4" text-anchor="middle" letter-spacing="0.15">12:00</text><text x="708.3" y="531.4" text-anchor="middle" letter-spacing="0.15">19. Juni</text><text x="767.1" y="531.4" text-anchor="middle" letter-spacing="0.15">12:00</text><text x="825.9" y="531.4" text-anchor="middle" letter-spacing="0.15">20. Juni</text><text x="884.7" y="531.4" text-anchor="middle" letter-spacing="0.15">12:00</text><text x="943.5" y="531.4" text-anchor="middle" letter-spacing="0.15">21. Juni</text><text x="98.7" y="518.9" text-anchor="end" letter-spacing="0.3">0 GW</text><text x="98.7" y="458.9" text-anchor="end" letter-spacing="0.3">25 GW</text><text x="98.7" y="398.9" text-anchor="end" letter-spacing="0.3">50 GW</text><text x="98.7" y="337.9" text-anchor="end" letter-spacing="0.3">75 GW</text><text x="98.7" y="277.9" text-anchor="end" letter-spacing="0.3">100 GW</text><text x="98.7" y="216.9" text-anchor="end" letter-spacing="0.3">125 GW</text><text x="959.8" y="518.3" letter-spacing="0.1">0g/kWh</text><text x="959.8" y="442.8" letter-spacing="0.1">200g/kWh</text><text x="959.8" y="367.3" letter-spacing="0.1">400g/kWh</text><text x="959.8" y="291.8" letter-spacing="0.1">600g/kWh</text><text x="959.8" y="216.3" letter-spacing="0.1">800g/kWh</text></g>
<text transform="translate(52.2,363.5) rotate(-90)" text-anchor="middle" font-size="11" fill="#666666" textLength="156" lengthAdjust="spacingAndGlyphs">Stromerzeugung und -verbrauch</text>
<text transform="translate(1014,278.2) rotate(90)" font-size="11" fill="#666666">CO<tspan font-size="8" dy="3">2</tspan><tspan dy="-3">-Emissionsfaktor des Strommix</tspan></text>
<path fill="#1da1f2" d="M1043.6,201.1c-0.8,0.35-1.6,0.6-2.5,0.7c0.9-0.55,1.6-1.4,1.9-2.4c-0.85,0.5-1.75,0.85-2.75,1.05c-0.8-0.85-1.9-1.35-3.150-1.35c-2.4,0-4.35,1.95-4.35,4.35c0,0.35,0.05,0.7,0.1,1c-3.6-0.2-6.8-1.9-8.95-4.5c-0.35,0.65-0.6,1.4-0.6,2.2c0,1.5,0.75,2.85,1.95,3.6c-0.7,0-1.4-0.2-1.950-0.55v0.05c0,2.1,1.5,3.85,3.5,4.25c-0.35,0.1-0.75,0.15-1.15,0.15c-0.3,0-0.55,0-0.8-0.1c0.55,1.7,2.15,2.95,4.05,3c-1.5,1.15-3.35,1.85-5.4,1.85c-0.35,0-0.7,0-1.05-0.05c1.95,1.25,4.2,1.95,6.65,1.95c8,0,12.35-6.6,12.35-12.35v-0.55C1042.3,202.7,1043,201.950,1043.6,201.1z"/>
<path fill="#cbd3d7" d="M1026.2,222 H1036 L1041,227.5 V242.2 Q1041,243.2 1040,243.2 H1026.2 Q1025.2,243.2 1025.2,242.2 V223 Q1025.2,222 1026.2,222 Z"/>
<text x="1033.1" y="236.6" text-anchor="middle" font-size="7.4" font-weight="bold" fill="#ffffff" textLength="13.8" lengthAdjust="spacingAndGlyphs">PNG</text>
<path fill="#cbd3d7" d="M1026.2,248 H1036 L1041,253.5 V267.8 Q1041,268.8 1040,268.8 H1026.2 Q1025.2,268.8 1025.2,267.8 V249 Q1025.2,248 1026.2,248 Z"/>
<text x="1033.1" y="262.3" text-anchor="middle" font-size="7.4" font-weight="bold" fill="#ffffff" textLength="13.8" lengthAdjust="spacingAndGlyphs">SVG</text>
<g fill="#cbd3d7"><rect x="1027" y="276" width="11.5" height="3.5"/><path d="M1025.5,280.5 H1040 Q1042,280.5 1042,282.5 V288 H1039 V285 H1026.5 V288 H1023.5 V282.5 Q1023.5,280.5 1025.5,280.5 Z"/><rect x="1027" y="286" width="11.5" height="6" fill="none" stroke="#cbd3d7" stroke-width="1.4"/></g>

<g font-size="10.65" font-weight="bold"><circle cx="113.2" cy="553.9" r="6.3" fill="#617593"/><text x="124.1" y="562.8" fill="#2b2b2b">Konv. Kraftwerke</text><circle cx="331.05" cy="553.9" r="6.3" fill="#ffd540"/><text x="341.9" y="562.8" fill="#2b2b2b">Solar</text><circle cx="548.9" cy="553.9" r="6.3" fill="#2083c1"/><text x="559.8" y="562.8" fill="#2b2b2b">Wind Onshore</text><circle cx="766.75" cy="553.9" r="6.3" fill="#0862a0"/><text x="777.6" y="562.8" fill="#2b2b2b">Wind Offshore</text><circle cx="113.2" cy="574.6" r="6.3" fill="#7ba7cf"/><text x="124.1" y="583.5" fill="#2b2b2b">Wasserkraft</text><circle cx="331.05" cy="574.6" r="6.3" fill="#477a4f"/><text x="341.9" y="583.5" fill="#2b2b2b">Biomasse</text><rect x="542.6" y="576.0" width="12.5" height="2" fill="#dc4096"/><text x="559.8" y="583.5" fill="#2b2b2b">Stromverbrauch</text><circle cx="766.75" cy="574.6" r="6.3" fill="#cccccc"/><text x="777.6" y="583.5" fill="#cccccc">Steinkohle</text><circle cx="113.2" cy="595.3" r="6.3" fill="#cccccc"/><text x="124.1" y="604.2" fill="#cccccc">Braunkohle</text><circle cx="331.05" cy="595.3" r="6.3" fill="#cccccc"/><text x="341.9" y="604.2" fill="#cccccc">Kernenergie</text><circle cx="548.9" cy="595.3" r="6.3" fill="#cccccc"/><text x="559.8" y="604.2" fill="#cccccc">Pumpspeicher</text><circle cx="766.75" cy="595.3" r="6.3" fill="#cccccc"/><text x="777.6" y="604.2" fill="#cccccc">Erdgas</text><circle cx="113.2" cy="616.0" r="6.3" fill="#cccccc"/><text x="124.1" y="624.9" fill="#cccccc">Andere</text><rect x="324.8" y="617.4" width="12.5" height="2" fill="#cccccc"/><text x="341.9" y="624.9" fill="#cccccc">CO<tspan font-size="8" dy="3">2</tspan><tspan dy="-3">-Emissionsfaktor des Strommix</tspan></text></g>
<text x="873" y="659" font-size="8.4" fill="#999999" textLength="170.6" lengthAdjust="spacingAndGlyphs">Agora Energiewende; Stand: 28.06.2020, 09:00</text>
<rect x="0" y="664" width="1057" height="61" fill="#edf1f2"/>
<rect x="9.1" y="672.9" width="133.9" height="35.8" rx="3" fill="#008fc6"/><text x="27.7" y="696.7" textLength="96.3" lengthAdjust="spacingAndGlyphs" fill="#ffffff" stroke="#008fc6" stroke-width="0.1" font-size="14">Letzten 7 Tage</text><rect x="152.1" y="672.9" width="129.5" height="35.8" rx="3" fill="#008fc6"/><text x="165.5" y="696.7" textLength="102.8" lengthAdjust="spacingAndGlyphs" fill="#ffffff" stroke="#008fc6" stroke-width="0.1" font-size="14">Letzten 31 Tage</text><rect x="291.1" y="672.9" width="134.7" height="35.8" rx="3" fill="#008fc6"/><text x="319.4" y="696.7" textLength="78.7" lengthAdjust="spacingAndGlyphs" fill="#ffffff" stroke="#008fc6" stroke-width="0.1" font-size="14">Letztes Jahr</text><rect x="905" y="672.9" width="137.9" height="35.8" rx="3" fill="#008fc6"/><text x="909.8" y="696.7" textLength="128.2" lengthAdjust="spacingAndGlyphs" fill="#ffffff" stroke="#008fc6" stroke-width="0.1" font-size="14">Zeitraum darstellen</text>
<rect x="434.8" y="673.2" width="202.7" height="36.5" rx="4" fill="#ffffff"/>
<rect x="684.1" y="673.2" width="202.7" height="36.5" rx="4" fill="#ffffff"/>
<text x="446.1" y="695.7" textLength="69.5" lengthAdjust="spacingAndGlyphs" font-size="14" fill="#555555" stroke="#ffffff" stroke-width="0.25">14.06.2020</text>
<text x="694.5" y="695.7" textLength="73.3" lengthAdjust="spacingAndGlyphs" font-size="14" fill="#555555" stroke="#ffffff" stroke-width="0.25">20.06.2020</text>
<text x="652.6" y="693.6" textLength="17.1" lengthAdjust="spacingAndGlyphs" font-size="14" fill="#666666" stroke="#edf1f2" stroke-width="0.25">bis</text>
</svg>
</body></html>
